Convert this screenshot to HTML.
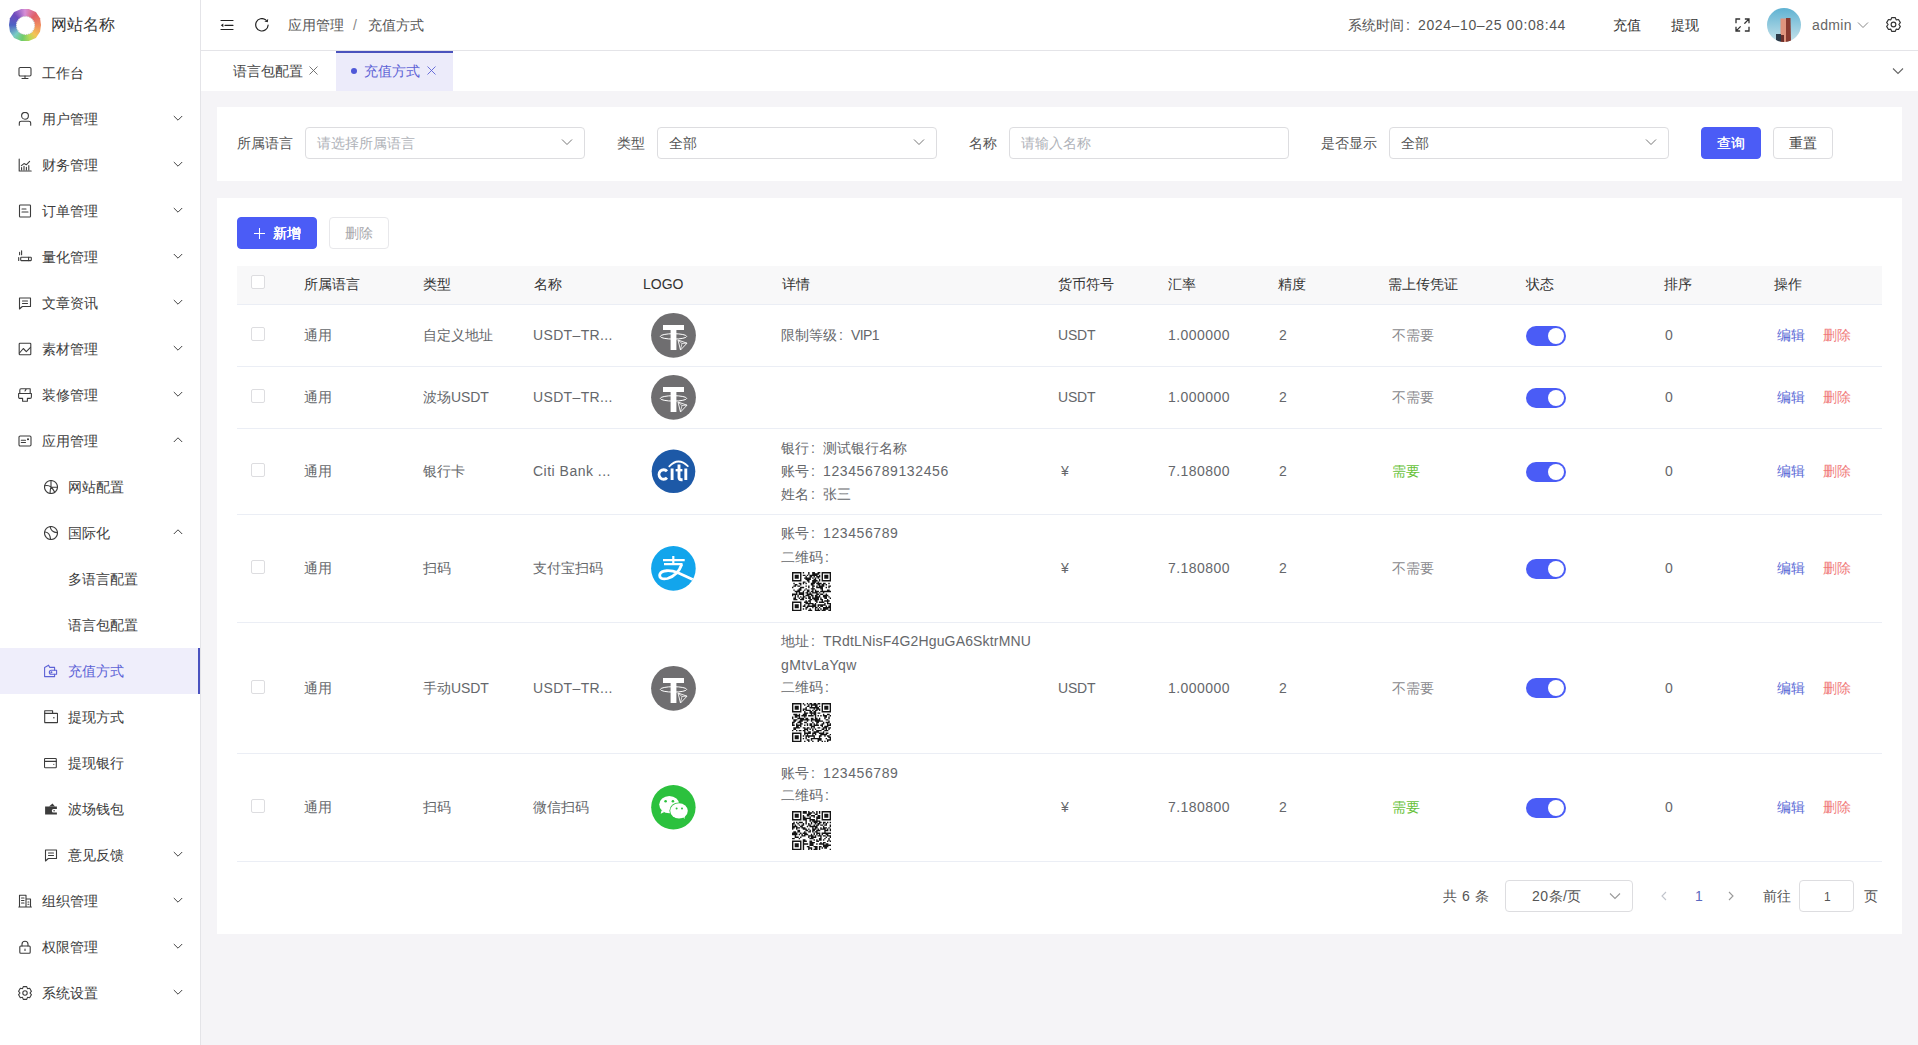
<!DOCTYPE html><html><head><meta charset="utf-8"><style>
*{margin:0;padding:0;box-sizing:border-box}
html,body{width:1918px;height:1045px;overflow:hidden;background:#f5f4f7;font-family:"Liberation Sans",sans-serif;font-size:14px;color:#65676b}
.abs{position:absolute;white-space:nowrap}
.t{position:absolute;white-space:nowrap;line-height:20px;height:20px}
.n{letter-spacing:0.6px}
.c{display:inline-block;width:14px;padding-left:2px;letter-spacing:0}
#side{position:absolute;left:0;top:0;width:201px;height:1045px;background:#fff;border-right:1px solid #e4e4e8}
.mi{position:absolute;left:0;width:200px;height:46px;color:#3c3c3c}
.mi svg.ic{position:absolute;top:16px;width:14px;height:14px}
.mi .tx{position:absolute;top:13px;line-height:20px;white-space:nowrap}
.mi svg.chev{position:absolute;left:173px;top:18px;width:10px;height:8px}
.act{background:#efeefb;color:#5c62d6}
.act::after{content:"";position:absolute;right:0;top:0;width:2px;height:46px;background:#4a52c0}
#hdr{position:absolute;left:201px;top:0;width:1717px;height:51px;background:#fff;border-bottom:1px solid #e4e4e8}
#tabs{position:absolute;left:201px;top:51px;width:1717px;height:40px;background:#fff}
.card{position:absolute;left:217px;width:1685px;background:#fff}
.inp{position:absolute;height:32px;border:1px solid #dddde0;border-radius:4px;background:#fff}
.btn{position:absolute;height:32px;border-radius:4px;text-align:center;line-height:30px;font-size:14px}
.cb{position:absolute;width:14px;height:14px;border:1px solid #dddde0;border-radius:2px;background:#fff}
.sw{position:absolute;width:40px;height:20px;border-radius:10px;background:#4a5cf6}
.sw::after{content:"";position:absolute;left:22px;top:2px;width:16px;height:16px;border-radius:50%;background:#fff}
.hl{position:absolute;left:237px;width:1645px;height:1px;background:#ebeef5}
</style></head><body>
<div id="side">
<div class="abs" style="left:9px;top:9px;width:32px;height:32px;clip-path:polygon(38% 0%,62% 0%,84% 9%,97% 29%,100% 50%,97% 71%,84% 91%,62% 100%,38% 100%,16% 91%,3% 71%,0% 50%,3% 29%,16% 9%);background:conic-gradient(from 0deg,#d78fd6,#e0606a 45deg,#ef8a5e 90deg,#f3c556 135deg,#b7d957 160deg,#6fcc6a 190deg,#79cbc5 225deg,#4d62c4 270deg,#6e4bbd 315deg,#d78fd6 360deg)"></div>
<div class="abs" style="left:15.5px;top:15.5px;width:19px;height:19px;border-radius:50%;background:#fff;border:1px dotted #c8c8c8"></div>
<div class="abs" style="left:51px;top:13px;font-size:16px;line-height:24px;color:#333">网站名称</div>
<div class="mi" style="top:50px"><svg class="ic" style="left:18px" viewBox="0 0 14 14" fill="none" stroke="currentColor" stroke-width="1.1" stroke-linecap="round" stroke-linejoin="round"><rect x="1" y="1.5" width="12" height="8.5" rx="1.2"/><path d="M7 10v2.5M4 12.5h6"/></svg><span class="tx" style="left:42px">工作台</span></div>
<div class="mi" style="top:96px"><svg class="ic" style="left:18px" viewBox="0 0 14 14" fill="none" stroke="currentColor" stroke-width="1.1" stroke-linecap="round" stroke-linejoin="round"><circle cx="7" cy="3.8" r="3.4"/><path d="M1.3 13.3V11.2Q1.3 9.3 3.3 9.3H10.7Q12.7 9.3 12.7 11.2V13.3"/></svg><span class="tx" style="left:42px">用户管理</span><svg class="chev" viewBox="0 0 10 8" fill="none" stroke="#444" stroke-width="1"><path d="M0.8 2l4.2 4.2 4.2-4.2"/></svg></div>
<div class="mi" style="top:142px"><svg class="ic" style="left:18px" viewBox="0 0 14 14" fill="none" stroke="currentColor" stroke-width="1.1" stroke-linecap="round" stroke-linejoin="round"><path d="M1.2 1v12h12"/><path d="M3.6 12V9.5M6 12V8.3M8.4 12V9.2M10.8 12V7.5"/><path d="M3.4 7.6L6 5.6 8.3 6.8 11.6 3.4"/></svg><span class="tx" style="left:42px">财务管理</span><svg class="chev" viewBox="0 0 10 8" fill="none" stroke="#444" stroke-width="1"><path d="M0.8 2l4.2 4.2 4.2-4.2"/></svg></div>
<div class="mi" style="top:188px"><svg class="ic" style="left:18px" viewBox="0 0 14 14" fill="none" stroke="currentColor" stroke-width="1.1" stroke-linecap="round" stroke-linejoin="round"><rect x="1.5" y="1" width="11" height="12" rx="0.8"/><path d="M4 5h4M4 8h6"/></svg><span class="tx" style="left:42px">订单管理</span><svg class="chev" viewBox="0 0 10 8" fill="none" stroke="#444" stroke-width="1"><path d="M0.8 2l4.2 4.2 4.2-4.2"/></svg></div>
<div class="mi" style="top:234px"><svg class="ic" style="left:18px" viewBox="0 0 14 14" fill="none" stroke="currentColor" stroke-width="1.1" stroke-linecap="round" stroke-linejoin="round"><path d="M1.6 2.4v2.4M3.6 0.7v4.1M0.7 7.5v3"/><rect x="2.7" y="7.3" width="10.6" height="3.3" rx="0.6"/><path d="M10.6 7.3v3.3"/></svg><span class="tx" style="left:42px">量化管理</span><svg class="chev" viewBox="0 0 10 8" fill="none" stroke="#444" stroke-width="1"><path d="M0.8 2l4.2 4.2 4.2-4.2"/></svg></div>
<div class="mi" style="top:280px"><svg class="ic" style="left:18px" viewBox="0 0 14 14" fill="none" stroke="currentColor" stroke-width="1.1" stroke-linecap="round" stroke-linejoin="round"><path d="M1.5 2h11v8.5H4.3L1.5 13z"/><path d="M4.5 5h5M4.5 7.5h5"/></svg><span class="tx" style="left:42px">文章资讯</span><svg class="chev" viewBox="0 0 10 8" fill="none" stroke="#444" stroke-width="1"><path d="M0.8 2l4.2 4.2 4.2-4.2"/></svg></div>
<div class="mi" style="top:326px"><svg class="ic" style="left:18px" viewBox="0 0 14 14" fill="none" stroke="currentColor" stroke-width="1.1" stroke-linecap="round" stroke-linejoin="round"><rect x="1.2" y="1.2" width="11.6" height="11.6" rx="0.8"/><path d="M1.5 11l3.8-4.5 3 3.2 4.2-4.4"/></svg><span class="tx" style="left:42px">素材管理</span><svg class="chev" viewBox="0 0 10 8" fill="none" stroke="#444" stroke-width="1"><path d="M0.8 2l4.2 4.2 4.2-4.2"/></svg></div>
<div class="mi" style="top:372px"><svg class="ic" style="left:18px" viewBox="0 0 14 14" fill="none" stroke="currentColor" stroke-width="1.1" stroke-linecap="round" stroke-linejoin="round"><path d="M1.8 5.5V2.3Q1.8 0.8 3 0.8H12.2V5.5M8.3 0.9L7 3"/><path d="M0.6 5.5H13.4V9Q13.4 10.4 12 10.4H9.4V13.2H4.6V10.4H2Q0.6 10.4 0.6 9Z"/></svg><span class="tx" style="left:42px">装修管理</span><svg class="chev" viewBox="0 0 10 8" fill="none" stroke="#444" stroke-width="1"><path d="M0.8 2l4.2 4.2 4.2-4.2"/></svg></div>
<div class="mi" style="top:418px"><svg class="ic" style="left:18px" viewBox="0 0 14 14" fill="none" stroke="currentColor" stroke-width="1.1" stroke-linecap="round" stroke-linejoin="round"><rect x="1" y="2" width="12" height="10" rx="1.2"/><path d="M3.3 6.2h4.2M3.3 8.5h4.2"/><circle cx="10" cy="5.3" r="0.5" fill="currentColor"/></svg><span class="tx" style="left:42px">应用管理</span><svg class="chev" viewBox="0 0 10 8" fill="none" stroke="#444" stroke-width="1"><path d="M0.8 6l4.2-4.2 4.2 4.2"/></svg></div>
<div class="mi" style="top:464px"><svg class="ic" style="left:44px" viewBox="0 0 14 14" fill="none" stroke="currentColor" stroke-width="1.1" stroke-linecap="round" stroke-linejoin="round"><circle cx="7" cy="7" r="6.5"/><path d="M7 0.6V7M7 7C5 5.3 3 5.2 0.7 5.8M7 7C6.2 9.5 6 11.5 6.2 13.4M7 7C9 9 10 10.5 10.7 12.3M7 7C9.5 7 11.5 7 13.4 7.2"/></svg><span class="tx" style="left:68px">网站配置</span></div>
<div class="mi" style="top:510px"><svg class="ic" style="left:44px" viewBox="0 0 14 14" fill="none" stroke="currentColor" stroke-width="1.1" stroke-linecap="round" stroke-linejoin="round"><circle cx="7" cy="7" r="6.5"/><path d="M1.2 6c3 .3 5 2.5 5.4 7.3M6.2 0.6c.3 3 2.5 5.6 7.2 6.2"/></svg><span class="tx" style="left:68px">国际化</span><svg class="chev" viewBox="0 0 10 8" fill="none" stroke="#444" stroke-width="1"><path d="M0.8 6l4.2-4.2 4.2 4.2"/></svg></div>
<div class="mi" style="top:556px"><span class="tx" style="left:68px">多语言配置</span></div>
<div class="mi" style="top:602px"><span class="tx" style="left:68px">语言包配置</span></div>
<div class="mi act" style="top:648px"><svg class="ic" style="left:44px" viewBox="0 0 14 14" fill="none" stroke="currentColor" stroke-width="1.1" stroke-linecap="round" stroke-linejoin="round"><path d="M10.6 6.3V3.4H5.8L4.6 1.2 0.6 3.4V12.6H10.6V10.3"/><path d="M12.6 6.3H7.3Q5.3 6.3 5.3 8.3Q5.3 10.3 7.3 10.3H12.6Z"/><circle cx="7.4" cy="8.3" r="0.5" fill="currentColor"/></svg><span class="tx" style="left:68px">充值方式</span></div>
<div class="mi" style="top:694px"><svg class="ic" style="left:44px" viewBox="0 0 14 14" fill="none" stroke="currentColor" stroke-width="1.1" stroke-linecap="round" stroke-linejoin="round"><rect x="0.7" y="3.4" width="12.8" height="9.2" rx="0.3"/><path d="M0.7 3.4V0.7H8.6V3.4"/><rect x="9.2" y="7.1" width="1.3" height="1.3" fill="currentColor" stroke="none"/></svg><span class="tx" style="left:68px">提现方式</span></div>
<div class="mi" style="top:740px"><svg class="ic" style="left:44px" viewBox="0 0 14 14" fill="none" stroke="currentColor" stroke-width="1.1" stroke-linecap="round" stroke-linejoin="round"><rect x="0.5" y="2.5" width="11.8" height="9.2" rx="0.8"/><path d="M0.5 5.4H12.3"/><rect x="9.3" y="7.9" width="1" height="1" fill="currentColor" stroke="none"/></svg><span class="tx" style="left:68px">提现银行</span></div>
<div class="mi" style="top:786px"><svg class="ic" style="left:44px" viewBox="0 0 14 14" fill="none" stroke="currentColor" stroke-width="1.1" stroke-linecap="round" stroke-linejoin="round"><path d="M1.1 4.6H12.9V6.9H9.6Q7.8 6.9 7.8 8.75Q7.8 10.6 9.6 10.6H12.9V12.6H1.1Z" fill="currentColor" stroke="none"/><path d="M5 4.6L8.5 1.4 11 4.6Z" fill="currentColor" stroke="none"/><circle cx="10.1" cy="8.7" r="0.8" fill="currentColor" stroke="none"/></svg><span class="tx" style="left:68px">波场钱包</span></div>
<div class="mi" style="top:832px"><svg class="ic" style="left:44px" viewBox="0 0 14 14" fill="none" stroke="currentColor" stroke-width="1.1" stroke-linecap="round" stroke-linejoin="round"><path d="M1.5 2h11v8.5H4.3L1.5 13z"/><path d="M4.5 5h5M4.5 7.5h5"/></svg><span class="tx" style="left:68px">意见反馈</span><svg class="chev" viewBox="0 0 10 8" fill="none" stroke="#444" stroke-width="1"><path d="M0.8 2l4.2 4.2 4.2-4.2"/></svg></div>
<div class="mi" style="top:878px"><svg class="ic" style="left:18px" viewBox="0 0 14 14" fill="none" stroke="currentColor" stroke-width="1.1" stroke-linecap="round" stroke-linejoin="round"><path d="M1.5 13V1.2h6.5V13M8 5h4.5v8M0.8 13h12.6M3.5 4h2.5M3.5 6.5h2.5M3.5 9h2.5M10 8h.8M10 10.3h.8"/></svg><span class="tx" style="left:42px">组织管理</span><svg class="chev" viewBox="0 0 10 8" fill="none" stroke="#444" stroke-width="1"><path d="M0.8 2l4.2 4.2 4.2-4.2"/></svg></div>
<div class="mi" style="top:924px"><svg class="ic" style="left:18px" viewBox="0 0 14 14" fill="none" stroke="currentColor" stroke-width="1.1" stroke-linecap="round" stroke-linejoin="round"><rect x="1.8" y="6" width="10.4" height="7.2" rx="1"/><path d="M4 6V4.2a3 3 0 0 1 6 0V6"/><path d="M7 9v1.5"/></svg><span class="tx" style="left:42px">权限管理</span><svg class="chev" viewBox="0 0 10 8" fill="none" stroke="#444" stroke-width="1"><path d="M0.8 2l4.2 4.2 4.2-4.2"/></svg></div>
<div class="mi" style="top:970px"><svg class="ic" style="left:18px" viewBox="0 0 14 14" fill="none" stroke="currentColor" stroke-width="1.1" stroke-linecap="round" stroke-linejoin="round"><path d="M4.50 2.67L5.29 0.62L8.71 0.62L9.50 2.67L9.50 2.67L11.67 2.33L13.38 5.29L12.00 7.00L12.00 7.00L13.38 8.71L11.67 11.67L9.50 11.33L9.50 11.33L8.71 13.38L5.29 13.38L4.50 11.33L4.50 11.33L2.33 11.67L0.62 8.71L2.00 7.00L2.00 7.00L0.62 5.29L2.33 2.33L4.50 2.67Z"/><circle cx="7" cy="7" r="2.2"/></svg><span class="tx" style="left:42px">系统设置</span><svg class="chev" viewBox="0 0 10 8" fill="none" stroke="#444" stroke-width="1"><path d="M0.8 2l4.2 4.2 4.2-4.2"/></svg></div>
</div>
<div id="hdr"></div>
<svg class="abs" style="left:220px;top:18px" width="14" height="14" viewBox="0 0 14 14" fill="none" stroke="#222" stroke-width="1.2" stroke-linecap="round"><path d="M1 2.5h12M5 7.3h8M1 11.5h12"/><path d="M0.8 7.3L3.3 5.4V9.2Z" fill="#222" stroke="none"/></svg>
<svg class="abs" style="left:255px;top:18px" width="14" height="14" viewBox="0 0 14 14" fill="none" stroke="#222" stroke-width="1.2" stroke-linecap="round"><path d="M13.1 7.2A6.2 6.2 0 1 1 10.6 1.8"/><path d="M13.2 0.9L12.8 4.3 9.4 3.5Z" fill="#222" stroke="none"/></svg>
<div class="t" style="left:288px;top:15px;color:#555">应用管理</div>
<div class="t" style="left:353px;top:15px;color:#888">/</div>
<div class="t" style="left:368px;top:15px;color:#555">充值方式</div>
<div class="t" style="left:1348px;top:15px;color:#555">系统时间<span class="c">:</span><span style="letter-spacing:0.62px">2024–10–25 00:08:44</span></div>
<div class="t" style="left:1613px;top:15px;color:#333">充值</div>
<div class="t" style="left:1671px;top:15px;color:#333">提现</div>
<svg class="abs" style="left:1735px;top:18px" width="15" height="14" viewBox="0 0 15 14" fill="none" stroke="#333" stroke-width="1.3" stroke-linecap="square"><path d="M1 4.5V1h3.5M14 9.5V13h-3.5M10.5 1H14v3.5M4.5 13H1V9.5M13.6 1.4L9.8 5.2M1.4 12.6l3.8-3.8"/></svg>
<svg class="abs" style="left:1767px;top:8px" width="34" height="34" viewBox="0 0 34 34"><defs><linearGradient id="av" x1="0" y1="0" x2="0" y2="1"><stop offset="0" stop-color="#5fb2d2"/><stop offset="1" stop-color="#c6e2ea"/></linearGradient><clipPath id="avc"><circle cx="17" cy="17" r="17"/></clipPath></defs><g clip-path="url(#avc)"><rect width="34" height="34" fill="url(#av)"/><path d="M13.5 34V10.5h5.5V34z" fill="#e0947e"/><path d="M19 10h4.5l.5 24h-5z" fill="#8a3a30"/><path d="M9 34V26h5v8z" fill="#2c3a48"/><path d="M14 34v-7h3v7z" fill="#6a2e2a"/></g></svg>
<div class="t" style="left:1812px;top:15px;color:#666;letter-spacing:0.37px">admin</div>
<svg class="abs" style="left:1857px;top:21px" width="12" height="8" viewBox="0 0 12 8" fill="none" stroke="#888" stroke-width="1"><path d="M1 1.5l5 5 5-5"/></svg>
<svg class="abs" style="left:1886px;top:17px" width="15" height="15" viewBox="0 0 14 14" fill="none" stroke="#333" stroke-width="1.1" stroke-linejoin="round"><path d="M4.50 2.67L5.29 0.62L8.71 0.62L9.50 2.67L9.50 2.67L11.67 2.33L13.38 5.29L12.00 7.00L12.00 7.00L13.38 8.71L11.67 11.67L9.50 11.33L9.50 11.33L8.71 13.38L5.29 13.38L4.50 11.33L4.50 11.33L2.33 11.67L0.62 8.71L2.00 7.00L2.00 7.00L0.62 5.29L2.33 2.33L4.50 2.67Z"/><circle cx="7" cy="7" r="2.2"/></svg>
<div id="tabs"></div>
<div class="t" style="left:233px;top:61px;color:#444">语言包配置</div>
<svg class="abs" style="left:309px;top:66px" width="9" height="9" viewBox="0 0 9 9" fill="none" stroke="#666" stroke-width="0.9"><path d="M0.5 0.5l8 8M8.5 0.5l-8 8"/></svg>
<div class="abs" style="left:336px;top:51px;width:117px;height:40px;background:#ecebfa;border-top:2px solid #4a52bd"></div>
<div class="abs" style="left:351px;top:68px;width:6px;height:6px;border-radius:50%;background:#4f58d8"></div>
<div class="t" style="left:364px;top:61px;color:#5c62d6">充值方式</div>
<svg class="abs" style="left:427px;top:66px" width="9" height="9" viewBox="0 0 9 9" fill="none" stroke="#5c62d6" stroke-width="0.9"><path d="M0.5 0.5l8 8M8.5 0.5l-8 8"/></svg>
<svg class="abs" style="left:1892px;top:67px" width="12" height="8" viewBox="0 0 12 8" fill="none" stroke="#666" stroke-width="1.1"><path d="M1 1.5l5 5 5-5"/></svg>
<div class="card" style="top:107px;height:74px"></div>
<div class="t" style="left:237px;top:133px;color:#555">所属语言</div>
<div class="inp" style="left:305px;top:127px;width:280px"></div>
<div class="t" style="left:317px;top:133px;color:#b0b3b9">请选择所属语言</div>
<svg class="abs" style="left:561px;top:138px" width="12" height="8" viewBox="0 0 12 8" fill="none" stroke="#666" stroke-width="0.9"><path d="M1 1.5l5 5 5-5"/></svg>
<div class="t" style="left:617px;top:133px;color:#555">类型</div>
<div class="inp" style="left:657px;top:127px;width:280px"></div>
<div class="t" style="left:669px;top:133px;color:#555">全部</div>
<svg class="abs" style="left:913px;top:138px" width="12" height="8" viewBox="0 0 12 8" fill="none" stroke="#666" stroke-width="0.9"><path d="M1 1.5l5 5 5-5"/></svg>
<div class="t" style="left:969px;top:133px;color:#555">名称</div>
<div class="inp" style="left:1009px;top:127px;width:280px"></div>
<div class="t" style="left:1021px;top:133px;color:#b0b3b9">请输入名称</div>
<div class="t" style="left:1321px;top:133px;color:#555">是否显示</div>
<div class="inp" style="left:1389px;top:127px;width:280px"></div>
<div class="t" style="left:1401px;top:133px;color:#555">全部</div>
<svg class="abs" style="left:1645px;top:138px" width="12" height="8" viewBox="0 0 12 8" fill="none" stroke="#666" stroke-width="0.9"><path d="M1 1.5l5 5 5-5"/></svg>
<div class="btn" style="left:1701px;top:127px;width:60px;background:#4b5cf6;color:#fff;border:1px solid #4b5cf6;text-shadow:0.35px 0 0 #fff">查询</div>
<div class="btn" style="left:1773px;top:127px;width:60px;background:#fff;color:#444;border:1px solid #dddde0">重置</div>
<div class="card" style="top:198px;height:736px"></div>
<div class="btn" style="left:237px;top:217px;width:80px;background:#4b5cf6;color:#fff;border:1px solid #4b5cf6"><svg style="position:absolute;left:16px;top:10px" width="11" height="11" viewBox="0 0 11 11" stroke="#fff" stroke-width="1.05"><path d="M5.5 0v11M0 5.5h11"/></svg><span style="position:absolute;left:35px;text-shadow:0.45px 0 0 #fff,-0.2px 0 0 #fff">新增</span></div>
<div class="btn" style="left:329px;top:217px;width:60px;background:#fff;color:#a8a8ac;border:1px solid #e8e8eb">删除</div>
<div class="abs" style="left:237px;top:266px;width:1645px;height:38px;background:#f8f8f9"></div>
<div class="hl" style="top:304px"></div>
<div class="cb" style="left:251px;top:275px"></div>
<div class="t" style="left:304px;top:274px;color:#333">所属语言</div>
<div class="t" style="left:423px;top:274px;color:#333">类型</div>
<div class="t" style="left:534px;top:274px;color:#333">名称</div>
<div class="t" style="left:643px;top:274px;color:#333">LOGO</div>
<div class="t" style="left:782px;top:274px;color:#333">详情</div>
<div class="t" style="left:1058px;top:274px;color:#333">货币符号</div>
<div class="t" style="left:1168px;top:274px;color:#333">汇率</div>
<div class="t" style="left:1278px;top:274px;color:#333">精度</div>
<div class="t" style="left:1388px;top:274px;color:#333">需上传凭证</div>
<div class="t" style="left:1526px;top:274px;color:#333">状态</div>
<div class="t" style="left:1664px;top:274px;color:#333">排序</div>
<div class="t" style="left:1774px;top:274px;color:#333">操作</div>
<div class="hl" style="top:366px"></div>
<div class="cb" style="left:251px;top:327px"></div>
<div class="t" style="left:304px;top:325px">通用</div>
<div class="t" style="left:423px;top:325px">自定义地址</div>
<div class="t" style="left:533px;top:325px"><span style="letter-spacing:0.35px">USDT–TR...</span></div>
<svg class="abs" style="left:645px;top:307px" width="56" height="56" viewBox="0 0 56 56"><circle cx="28.5" cy="28.3" r="22.4" fill="#6f6e70"/><path d="M18 18h21v5h-7.6v20h-5.8V23H18z" fill="#fff"/><ellipse cx="28.5" cy="29.4" rx="13.2" ry="2.7" fill="none" stroke="#fff" stroke-width="1"/><path d="M33 33l9 3.2-6.5 6.8z" fill="none" stroke="#fff" stroke-width="0.9" stroke-linejoin="round"/><path d="M33.5 33.5l3.5 3 -1.5 6M42 36.2l-5 .3" fill="none" stroke="#fff" stroke-width="0.7"/></svg>
<div class="t" style="left:781px;top:324px;line-height:23px;height:23px">限制等级<span class="c">:</span><span style="letter-spacing:-0.60px">VIP1</span></div>
<div class="t" style="left:1058px;top:325px"><span style="letter-spacing:-0.20px">USDT</span></div>
<div class="t" style="left:1168px;top:325px"><span style="letter-spacing:0.45px">1.000000</span></div>
<div class="t" style="left:1279px;top:325px">2</div>
<div class="t" style="left:1392px;top:325px;color:#8a8a8e">不需要</div>
<div class="sw" style="left:1526px;top:326px"></div>
<div class="t" style="left:1665px;top:325px">0</div>
<div class="t" style="left:1777px;top:325px;color:#5a6ad6">编辑</div>
<div class="t" style="left:1823px;top:325px;color:#f07a7a">删除</div>
<div class="hl" style="top:428px"></div>
<div class="cb" style="left:251px;top:389px"></div>
<div class="t" style="left:304px;top:387px">通用</div>
<div class="t" style="left:423px;top:387px">波场<span style="letter-spacing:-0.10px">USDT</span></div>
<div class="t" style="left:533px;top:387px"><span style="letter-spacing:0.35px">USDT–TR...</span></div>
<svg class="abs" style="left:645px;top:369px" width="56" height="56" viewBox="0 0 56 56"><circle cx="28.5" cy="28.3" r="22.4" fill="#6f6e70"/><path d="M18 18h21v5h-7.6v20h-5.8V23H18z" fill="#fff"/><ellipse cx="28.5" cy="29.4" rx="13.2" ry="2.7" fill="none" stroke="#fff" stroke-width="1"/><path d="M33 33l9 3.2-6.5 6.8z" fill="none" stroke="#fff" stroke-width="0.9" stroke-linejoin="round"/><path d="M33.5 33.5l3.5 3 -1.5 6M42 36.2l-5 .3" fill="none" stroke="#fff" stroke-width="0.7"/></svg>
<div class="t" style="left:1058px;top:387px"><span style="letter-spacing:-0.20px">USDT</span></div>
<div class="t" style="left:1168px;top:387px"><span style="letter-spacing:0.45px">1.000000</span></div>
<div class="t" style="left:1279px;top:387px">2</div>
<div class="t" style="left:1392px;top:387px;color:#8a8a8e">不需要</div>
<div class="sw" style="left:1526px;top:388px"></div>
<div class="t" style="left:1665px;top:387px">0</div>
<div class="t" style="left:1777px;top:387px;color:#5a6ad6">编辑</div>
<div class="t" style="left:1823px;top:387px;color:#f07a7a">删除</div>
<div class="hl" style="top:514px"></div>
<div class="cb" style="left:251px;top:463px"></div>
<div class="t" style="left:304px;top:461px">通用</div>
<div class="t" style="left:423px;top:461px">银行卡</div>
<div class="t" style="left:533px;top:461px"><span style="letter-spacing:0.49px">Citi Bank ...</span></div>
<svg class="abs" style="left:645px;top:443px" width="56" height="56" viewBox="0 0 56 56"><circle cx="28.5" cy="28.3" r="21.8" fill="#1d59a7"/><path d="M24.3 23.3Q33.4 13.8 42.8 23.1" fill="none" stroke="#fff" stroke-width="1.8" stroke-linecap="round"/><path d="M22 28.2a4.6 4.8 0 1 0 0 6.6" fill="none" stroke="#fff" stroke-width="2.9"/><path d="M27.1 25.5V37M40.8 25.5V37" fill="none" stroke="#fff" stroke-width="2.9"/><path d="M34 21.5V34.5q0 2.2 2.6 2.2h1" fill="none" stroke="#fff" stroke-width="2.9"/><path d="M30.6 27.2h6.8" fill="none" stroke="#fff" stroke-width="2.4"/></svg>
<div class="t" style="left:781px;top:437px;line-height:23px;height:23px">银行<span class="c">:</span>测试银行名称</div>
<div class="t" style="left:781px;top:460px;line-height:23px;height:23px">账号<span class="c">:</span><span style="letter-spacing:0.60px">123456789132456</span></div>
<div class="t" style="left:781px;top:483px;line-height:23px;height:23px">姓名<span class="c">:</span>张三</div>
<div class="t" style="left:1061px;top:461px">¥</div>
<div class="t" style="left:1168px;top:461px"><span style="letter-spacing:0.45px">7.180800</span></div>
<div class="t" style="left:1279px;top:461px">2</div>
<div class="t" style="left:1392px;top:461px;color:#67c23a">需要</div>
<div class="sw" style="left:1526px;top:462px"></div>
<div class="t" style="left:1665px;top:461px">0</div>
<div class="t" style="left:1777px;top:461px;color:#5a6ad6">编辑</div>
<div class="t" style="left:1823px;top:461px;color:#f07a7a">删除</div>
<div class="hl" style="top:622px"></div>
<div class="cb" style="left:251px;top:560px"></div>
<div class="t" style="left:304px;top:558px">通用</div>
<div class="t" style="left:423px;top:558px">扫码</div>
<div class="t" style="left:533px;top:558px">支付宝扫码</div>
<svg class="abs" style="left:645px;top:540px" width="56" height="56" viewBox="0 0 56 56"><defs><clipPath id="ac568"><circle cx="28.4" cy="28.4" r="22.3"/></clipPath></defs><circle cx="28.4" cy="28.4" r="22.3" fill="#12a5ec"/><g clip-path="url(#ac568)" fill="none" stroke="#fff" stroke-linecap="butt"><path d="M18 20.1H39.7M28.3 16V23.5M19 24.1H37.5" stroke-width="2.2"/><path d="M36.8 24.3C34.5 31 29.5 36.5 22.5 38.5C16.5 40 13.8 37.3 15 34C16.5 30.2 25 29.5 33 32.8L52 41.5" stroke-width="2.8"/></g></svg>
<div class="t" style="left:781px;top:522px;line-height:23px;height:23px">账号<span class="c">:</span><span style="letter-spacing:0.60px">123456789</span></div>
<div class="t" style="left:781px;top:546px;line-height:23px;height:23px">二维码<span class="c">:</span></div>
<svg class="abs" style="left:792px;top:572px" width="39" height="39" viewBox="0 0 39 39"><path d="M0.00 0.00h1.39v1.39h-1.39zM1.34 0.00h1.39v1.39h-1.39zM2.69 0.00h1.39v1.39h-1.39zM4.03 0.00h1.39v1.39h-1.39zM5.38 0.00h1.39v1.39h-1.39zM6.72 0.00h1.39v1.39h-1.39zM8.07 0.00h1.39v1.39h-1.39zM10.76 0.00h1.39v1.39h-1.39zM16.14 0.00h1.39v1.39h-1.39zM20.17 0.00h1.39v1.39h-1.39zM21.52 0.00h1.39v1.39h-1.39zM25.55 0.00h1.39v1.39h-1.39zM26.90 0.00h1.39v1.39h-1.39zM29.59 0.00h1.39v1.39h-1.39zM30.93 0.00h1.39v1.39h-1.39zM32.28 0.00h1.39v1.39h-1.39zM33.62 0.00h1.39v1.39h-1.39zM34.97 0.00h1.39v1.39h-1.39zM36.31 0.00h1.39v1.39h-1.39zM37.66 0.00h1.39v1.39h-1.39zM0.00 1.34h1.39v1.39h-1.39zM8.07 1.34h1.39v1.39h-1.39zM16.14 1.34h1.39v1.39h-1.39zM20.17 1.34h1.39v1.39h-1.39zM21.52 1.34h1.39v1.39h-1.39zM22.86 1.34h1.39v1.39h-1.39zM24.21 1.34h1.39v1.39h-1.39zM25.55 1.34h1.39v1.39h-1.39zM29.59 1.34h1.39v1.39h-1.39zM37.66 1.34h1.39v1.39h-1.39zM0.00 2.69h1.39v1.39h-1.39zM2.69 2.69h1.39v1.39h-1.39zM4.03 2.69h1.39v1.39h-1.39zM5.38 2.69h1.39v1.39h-1.39zM8.07 2.69h1.39v1.39h-1.39zM10.76 2.69h1.39v1.39h-1.39zM12.10 2.69h1.39v1.39h-1.39zM14.79 2.69h1.39v1.39h-1.39zM17.48 2.69h1.39v1.39h-1.39zM18.83 2.69h1.39v1.39h-1.39zM20.17 2.69h1.39v1.39h-1.39zM21.52 2.69h1.39v1.39h-1.39zM22.86 2.69h1.39v1.39h-1.39zM24.21 2.69h1.39v1.39h-1.39zM26.90 2.69h1.39v1.39h-1.39zM29.59 2.69h1.39v1.39h-1.39zM32.28 2.69h1.39v1.39h-1.39zM33.62 2.69h1.39v1.39h-1.39zM34.97 2.69h1.39v1.39h-1.39zM37.66 2.69h1.39v1.39h-1.39zM0.00 4.03h1.39v1.39h-1.39zM2.69 4.03h1.39v1.39h-1.39zM4.03 4.03h1.39v1.39h-1.39zM5.38 4.03h1.39v1.39h-1.39zM8.07 4.03h1.39v1.39h-1.39zM13.45 4.03h1.39v1.39h-1.39zM17.48 4.03h1.39v1.39h-1.39zM18.83 4.03h1.39v1.39h-1.39zM21.52 4.03h1.39v1.39h-1.39zM24.21 4.03h1.39v1.39h-1.39zM25.55 4.03h1.39v1.39h-1.39zM26.90 4.03h1.39v1.39h-1.39zM29.59 4.03h1.39v1.39h-1.39zM32.28 4.03h1.39v1.39h-1.39zM33.62 4.03h1.39v1.39h-1.39zM34.97 4.03h1.39v1.39h-1.39zM37.66 4.03h1.39v1.39h-1.39zM0.00 5.38h1.39v1.39h-1.39zM2.69 5.38h1.39v1.39h-1.39zM4.03 5.38h1.39v1.39h-1.39zM5.38 5.38h1.39v1.39h-1.39zM8.07 5.38h1.39v1.39h-1.39zM12.10 5.38h1.39v1.39h-1.39zM13.45 5.38h1.39v1.39h-1.39zM14.79 5.38h1.39v1.39h-1.39zM16.14 5.38h1.39v1.39h-1.39zM17.48 5.38h1.39v1.39h-1.39zM20.17 5.38h1.39v1.39h-1.39zM22.86 5.38h1.39v1.39h-1.39zM25.55 5.38h1.39v1.39h-1.39zM29.59 5.38h1.39v1.39h-1.39zM32.28 5.38h1.39v1.39h-1.39zM33.62 5.38h1.39v1.39h-1.39zM34.97 5.38h1.39v1.39h-1.39zM37.66 5.38h1.39v1.39h-1.39zM0.00 6.72h1.39v1.39h-1.39zM8.07 6.72h1.39v1.39h-1.39zM13.45 6.72h1.39v1.39h-1.39zM14.79 6.72h1.39v1.39h-1.39zM16.14 6.72h1.39v1.39h-1.39zM17.48 6.72h1.39v1.39h-1.39zM21.52 6.72h1.39v1.39h-1.39zM22.86 6.72h1.39v1.39h-1.39zM26.90 6.72h1.39v1.39h-1.39zM29.59 6.72h1.39v1.39h-1.39zM37.66 6.72h1.39v1.39h-1.39zM0.00 8.07h1.39v1.39h-1.39zM1.34 8.07h1.39v1.39h-1.39zM2.69 8.07h1.39v1.39h-1.39zM4.03 8.07h1.39v1.39h-1.39zM5.38 8.07h1.39v1.39h-1.39zM6.72 8.07h1.39v1.39h-1.39zM8.07 8.07h1.39v1.39h-1.39zM14.79 8.07h1.39v1.39h-1.39zM16.14 8.07h1.39v1.39h-1.39zM20.17 8.07h1.39v1.39h-1.39zM21.52 8.07h1.39v1.39h-1.39zM22.86 8.07h1.39v1.39h-1.39zM24.21 8.07h1.39v1.39h-1.39zM26.90 8.07h1.39v1.39h-1.39zM29.59 8.07h1.39v1.39h-1.39zM30.93 8.07h1.39v1.39h-1.39zM32.28 8.07h1.39v1.39h-1.39zM33.62 8.07h1.39v1.39h-1.39zM34.97 8.07h1.39v1.39h-1.39zM36.31 8.07h1.39v1.39h-1.39zM37.66 8.07h1.39v1.39h-1.39zM10.76 9.41h1.39v1.39h-1.39zM12.10 9.41h1.39v1.39h-1.39zM16.14 9.41h1.39v1.39h-1.39zM20.17 9.41h1.39v1.39h-1.39zM21.52 9.41h1.39v1.39h-1.39zM22.86 9.41h1.39v1.39h-1.39zM25.55 9.41h1.39v1.39h-1.39zM1.34 10.76h1.39v1.39h-1.39zM6.72 10.76h1.39v1.39h-1.39zM8.07 10.76h1.39v1.39h-1.39zM10.76 10.76h1.39v1.39h-1.39zM13.45 10.76h1.39v1.39h-1.39zM18.83 10.76h1.39v1.39h-1.39zM20.17 10.76h1.39v1.39h-1.39zM21.52 10.76h1.39v1.39h-1.39zM24.21 10.76h1.39v1.39h-1.39zM25.55 10.76h1.39v1.39h-1.39zM26.90 10.76h1.39v1.39h-1.39zM28.24 10.76h1.39v1.39h-1.39zM30.93 10.76h1.39v1.39h-1.39zM32.28 10.76h1.39v1.39h-1.39zM36.31 10.76h1.39v1.39h-1.39zM2.69 12.10h1.39v1.39h-1.39zM4.03 12.10h1.39v1.39h-1.39zM8.07 12.10h1.39v1.39h-1.39zM18.83 12.10h1.39v1.39h-1.39zM20.17 12.10h1.39v1.39h-1.39zM25.55 12.10h1.39v1.39h-1.39zM26.90 12.10h1.39v1.39h-1.39zM29.59 12.10h1.39v1.39h-1.39zM30.93 12.10h1.39v1.39h-1.39zM33.62 12.10h1.39v1.39h-1.39zM1.34 13.45h1.39v1.39h-1.39zM2.69 13.45h1.39v1.39h-1.39zM5.38 13.45h1.39v1.39h-1.39zM6.72 13.45h1.39v1.39h-1.39zM13.45 13.45h1.39v1.39h-1.39zM16.14 13.45h1.39v1.39h-1.39zM20.17 13.45h1.39v1.39h-1.39zM21.52 13.45h1.39v1.39h-1.39zM24.21 13.45h1.39v1.39h-1.39zM26.90 13.45h1.39v1.39h-1.39zM28.24 13.45h1.39v1.39h-1.39zM29.59 13.45h1.39v1.39h-1.39zM30.93 13.45h1.39v1.39h-1.39zM36.31 13.45h1.39v1.39h-1.39zM37.66 13.45h1.39v1.39h-1.39zM0.00 14.79h1.39v1.39h-1.39zM8.07 14.79h1.39v1.39h-1.39zM9.41 14.79h1.39v1.39h-1.39zM10.76 14.79h1.39v1.39h-1.39zM16.14 14.79h1.39v1.39h-1.39zM20.17 14.79h1.39v1.39h-1.39zM24.21 14.79h1.39v1.39h-1.39zM25.55 14.79h1.39v1.39h-1.39zM26.90 14.79h1.39v1.39h-1.39zM28.24 14.79h1.39v1.39h-1.39zM29.59 14.79h1.39v1.39h-1.39zM33.62 14.79h1.39v1.39h-1.39zM36.31 14.79h1.39v1.39h-1.39zM6.72 16.14h1.39v1.39h-1.39zM8.07 16.14h1.39v1.39h-1.39zM13.45 16.14h1.39v1.39h-1.39zM18.83 16.14h1.39v1.39h-1.39zM20.17 16.14h1.39v1.39h-1.39zM21.52 16.14h1.39v1.39h-1.39zM28.24 16.14h1.39v1.39h-1.39zM29.59 16.14h1.39v1.39h-1.39zM1.34 17.48h1.39v1.39h-1.39zM5.38 17.48h1.39v1.39h-1.39zM6.72 17.48h1.39v1.39h-1.39zM8.07 17.48h1.39v1.39h-1.39zM12.10 17.48h1.39v1.39h-1.39zM14.79 17.48h1.39v1.39h-1.39zM16.14 17.48h1.39v1.39h-1.39zM20.17 17.48h1.39v1.39h-1.39zM22.86 17.48h1.39v1.39h-1.39zM29.59 17.48h1.39v1.39h-1.39zM34.97 17.48h1.39v1.39h-1.39zM36.31 17.48h1.39v1.39h-1.39zM2.69 18.83h1.39v1.39h-1.39zM4.03 18.83h1.39v1.39h-1.39zM5.38 18.83h1.39v1.39h-1.39zM6.72 18.83h1.39v1.39h-1.39zM10.76 18.83h1.39v1.39h-1.39zM14.79 18.83h1.39v1.39h-1.39zM16.14 18.83h1.39v1.39h-1.39zM18.83 18.83h1.39v1.39h-1.39zM20.17 18.83h1.39v1.39h-1.39zM22.86 18.83h1.39v1.39h-1.39zM24.21 18.83h1.39v1.39h-1.39zM25.55 18.83h1.39v1.39h-1.39zM28.24 18.83h1.39v1.39h-1.39zM29.59 18.83h1.39v1.39h-1.39zM30.93 18.83h1.39v1.39h-1.39zM32.28 18.83h1.39v1.39h-1.39zM33.62 18.83h1.39v1.39h-1.39zM34.97 18.83h1.39v1.39h-1.39zM36.31 18.83h1.39v1.39h-1.39zM37.66 18.83h1.39v1.39h-1.39zM4.03 20.17h1.39v1.39h-1.39zM6.72 20.17h1.39v1.39h-1.39zM8.07 20.17h1.39v1.39h-1.39zM9.41 20.17h1.39v1.39h-1.39zM10.76 20.17h1.39v1.39h-1.39zM13.45 20.17h1.39v1.39h-1.39zM14.79 20.17h1.39v1.39h-1.39zM17.48 20.17h1.39v1.39h-1.39zM20.17 20.17h1.39v1.39h-1.39zM21.52 20.17h1.39v1.39h-1.39zM22.86 20.17h1.39v1.39h-1.39zM24.21 20.17h1.39v1.39h-1.39zM26.90 20.17h1.39v1.39h-1.39zM30.93 20.17h1.39v1.39h-1.39zM0.00 21.52h1.39v1.39h-1.39zM1.34 21.52h1.39v1.39h-1.39zM2.69 21.52h1.39v1.39h-1.39zM4.03 21.52h1.39v1.39h-1.39zM6.72 21.52h1.39v1.39h-1.39zM8.07 21.52h1.39v1.39h-1.39zM9.41 21.52h1.39v1.39h-1.39zM10.76 21.52h1.39v1.39h-1.39zM14.79 21.52h1.39v1.39h-1.39zM16.14 21.52h1.39v1.39h-1.39zM17.48 21.52h1.39v1.39h-1.39zM18.83 21.52h1.39v1.39h-1.39zM24.21 21.52h1.39v1.39h-1.39zM25.55 21.52h1.39v1.39h-1.39zM28.24 21.52h1.39v1.39h-1.39zM29.59 21.52h1.39v1.39h-1.39zM33.62 21.52h1.39v1.39h-1.39zM0.00 22.86h1.39v1.39h-1.39zM2.69 22.86h1.39v1.39h-1.39zM5.38 22.86h1.39v1.39h-1.39zM10.76 22.86h1.39v1.39h-1.39zM13.45 22.86h1.39v1.39h-1.39zM14.79 22.86h1.39v1.39h-1.39zM16.14 22.86h1.39v1.39h-1.39zM18.83 22.86h1.39v1.39h-1.39zM20.17 22.86h1.39v1.39h-1.39zM22.86 22.86h1.39v1.39h-1.39zM24.21 22.86h1.39v1.39h-1.39zM26.90 22.86h1.39v1.39h-1.39zM30.93 22.86h1.39v1.39h-1.39zM32.28 22.86h1.39v1.39h-1.39zM33.62 22.86h1.39v1.39h-1.39zM34.97 22.86h1.39v1.39h-1.39zM2.69 24.21h1.39v1.39h-1.39zM5.38 24.21h1.39v1.39h-1.39zM8.07 24.21h1.39v1.39h-1.39zM10.76 24.21h1.39v1.39h-1.39zM12.10 24.21h1.39v1.39h-1.39zM16.14 24.21h1.39v1.39h-1.39zM17.48 24.21h1.39v1.39h-1.39zM20.17 24.21h1.39v1.39h-1.39zM22.86 24.21h1.39v1.39h-1.39zM24.21 24.21h1.39v1.39h-1.39zM25.55 24.21h1.39v1.39h-1.39zM26.90 24.21h1.39v1.39h-1.39zM30.93 24.21h1.39v1.39h-1.39zM32.28 24.21h1.39v1.39h-1.39zM33.62 24.21h1.39v1.39h-1.39zM36.31 24.21h1.39v1.39h-1.39zM1.34 25.55h1.39v1.39h-1.39zM2.69 25.55h1.39v1.39h-1.39zM6.72 25.55h1.39v1.39h-1.39zM9.41 25.55h1.39v1.39h-1.39zM10.76 25.55h1.39v1.39h-1.39zM13.45 25.55h1.39v1.39h-1.39zM16.14 25.55h1.39v1.39h-1.39zM17.48 25.55h1.39v1.39h-1.39zM20.17 25.55h1.39v1.39h-1.39zM21.52 25.55h1.39v1.39h-1.39zM22.86 25.55h1.39v1.39h-1.39zM24.21 25.55h1.39v1.39h-1.39zM25.55 25.55h1.39v1.39h-1.39zM28.24 25.55h1.39v1.39h-1.39zM32.28 25.55h1.39v1.39h-1.39zM33.62 25.55h1.39v1.39h-1.39zM37.66 25.55h1.39v1.39h-1.39zM1.34 26.90h1.39v1.39h-1.39zM2.69 26.90h1.39v1.39h-1.39zM4.03 26.90h1.39v1.39h-1.39zM8.07 26.90h1.39v1.39h-1.39zM9.41 26.90h1.39v1.39h-1.39zM10.76 26.90h1.39v1.39h-1.39zM17.48 26.90h1.39v1.39h-1.39zM18.83 26.90h1.39v1.39h-1.39zM21.52 26.90h1.39v1.39h-1.39zM22.86 26.90h1.39v1.39h-1.39zM24.21 26.90h1.39v1.39h-1.39zM25.55 26.90h1.39v1.39h-1.39zM28.24 26.90h1.39v1.39h-1.39zM29.59 26.90h1.39v1.39h-1.39zM34.97 26.90h1.39v1.39h-1.39zM13.45 28.24h1.39v1.39h-1.39zM16.14 28.24h1.39v1.39h-1.39zM17.48 28.24h1.39v1.39h-1.39zM22.86 28.24h1.39v1.39h-1.39zM24.21 28.24h1.39v1.39h-1.39zM29.59 28.24h1.39v1.39h-1.39zM32.28 28.24h1.39v1.39h-1.39zM33.62 28.24h1.39v1.39h-1.39zM34.97 28.24h1.39v1.39h-1.39zM36.31 28.24h1.39v1.39h-1.39zM0.00 29.59h1.39v1.39h-1.39zM1.34 29.59h1.39v1.39h-1.39zM2.69 29.59h1.39v1.39h-1.39zM4.03 29.59h1.39v1.39h-1.39zM5.38 29.59h1.39v1.39h-1.39zM6.72 29.59h1.39v1.39h-1.39zM8.07 29.59h1.39v1.39h-1.39zM12.10 29.59h1.39v1.39h-1.39zM13.45 29.59h1.39v1.39h-1.39zM14.79 29.59h1.39v1.39h-1.39zM17.48 29.59h1.39v1.39h-1.39zM24.21 29.59h1.39v1.39h-1.39zM26.90 29.59h1.39v1.39h-1.39zM28.24 29.59h1.39v1.39h-1.39zM29.59 29.59h1.39v1.39h-1.39zM30.93 29.59h1.39v1.39h-1.39zM34.97 29.59h1.39v1.39h-1.39zM0.00 30.93h1.39v1.39h-1.39zM8.07 30.93h1.39v1.39h-1.39zM13.45 30.93h1.39v1.39h-1.39zM14.79 30.93h1.39v1.39h-1.39zM16.14 30.93h1.39v1.39h-1.39zM17.48 30.93h1.39v1.39h-1.39zM18.83 30.93h1.39v1.39h-1.39zM20.17 30.93h1.39v1.39h-1.39zM22.86 30.93h1.39v1.39h-1.39zM32.28 30.93h1.39v1.39h-1.39zM34.97 30.93h1.39v1.39h-1.39zM36.31 30.93h1.39v1.39h-1.39zM37.66 30.93h1.39v1.39h-1.39zM0.00 32.28h1.39v1.39h-1.39zM2.69 32.28h1.39v1.39h-1.39zM4.03 32.28h1.39v1.39h-1.39zM5.38 32.28h1.39v1.39h-1.39zM8.07 32.28h1.39v1.39h-1.39zM12.10 32.28h1.39v1.39h-1.39zM16.14 32.28h1.39v1.39h-1.39zM20.17 32.28h1.39v1.39h-1.39zM21.52 32.28h1.39v1.39h-1.39zM22.86 32.28h1.39v1.39h-1.39zM25.55 32.28h1.39v1.39h-1.39zM26.90 32.28h1.39v1.39h-1.39zM28.24 32.28h1.39v1.39h-1.39zM29.59 32.28h1.39v1.39h-1.39zM30.93 32.28h1.39v1.39h-1.39zM32.28 32.28h1.39v1.39h-1.39zM37.66 32.28h1.39v1.39h-1.39zM0.00 33.62h1.39v1.39h-1.39zM2.69 33.62h1.39v1.39h-1.39zM4.03 33.62h1.39v1.39h-1.39zM5.38 33.62h1.39v1.39h-1.39zM8.07 33.62h1.39v1.39h-1.39zM10.76 33.62h1.39v1.39h-1.39zM12.10 33.62h1.39v1.39h-1.39zM14.79 33.62h1.39v1.39h-1.39zM16.14 33.62h1.39v1.39h-1.39zM17.48 33.62h1.39v1.39h-1.39zM18.83 33.62h1.39v1.39h-1.39zM20.17 33.62h1.39v1.39h-1.39zM21.52 33.62h1.39v1.39h-1.39zM22.86 33.62h1.39v1.39h-1.39zM25.55 33.62h1.39v1.39h-1.39zM28.24 33.62h1.39v1.39h-1.39zM29.59 33.62h1.39v1.39h-1.39zM33.62 33.62h1.39v1.39h-1.39zM36.31 33.62h1.39v1.39h-1.39zM37.66 33.62h1.39v1.39h-1.39zM0.00 34.97h1.39v1.39h-1.39zM2.69 34.97h1.39v1.39h-1.39zM4.03 34.97h1.39v1.39h-1.39zM5.38 34.97h1.39v1.39h-1.39zM8.07 34.97h1.39v1.39h-1.39zM13.45 34.97h1.39v1.39h-1.39zM14.79 34.97h1.39v1.39h-1.39zM20.17 34.97h1.39v1.39h-1.39zM22.86 34.97h1.39v1.39h-1.39zM24.21 34.97h1.39v1.39h-1.39zM26.90 34.97h1.39v1.39h-1.39zM30.93 34.97h1.39v1.39h-1.39zM32.28 34.97h1.39v1.39h-1.39zM33.62 34.97h1.39v1.39h-1.39zM34.97 34.97h1.39v1.39h-1.39zM36.31 34.97h1.39v1.39h-1.39zM37.66 34.97h1.39v1.39h-1.39zM0.00 36.31h1.39v1.39h-1.39zM8.07 36.31h1.39v1.39h-1.39zM10.76 36.31h1.39v1.39h-1.39zM13.45 36.31h1.39v1.39h-1.39zM17.48 36.31h1.39v1.39h-1.39zM22.86 36.31h1.39v1.39h-1.39zM25.55 36.31h1.39v1.39h-1.39zM28.24 36.31h1.39v1.39h-1.39zM30.93 36.31h1.39v1.39h-1.39zM32.28 36.31h1.39v1.39h-1.39zM33.62 36.31h1.39v1.39h-1.39zM34.97 36.31h1.39v1.39h-1.39zM37.66 36.31h1.39v1.39h-1.39zM0.00 37.66h1.39v1.39h-1.39zM1.34 37.66h1.39v1.39h-1.39zM2.69 37.66h1.39v1.39h-1.39zM4.03 37.66h1.39v1.39h-1.39zM5.38 37.66h1.39v1.39h-1.39zM6.72 37.66h1.39v1.39h-1.39zM8.07 37.66h1.39v1.39h-1.39zM16.14 37.66h1.39v1.39h-1.39zM17.48 37.66h1.39v1.39h-1.39zM18.83 37.66h1.39v1.39h-1.39zM22.86 37.66h1.39v1.39h-1.39zM24.21 37.66h1.39v1.39h-1.39zM25.55 37.66h1.39v1.39h-1.39zM26.90 37.66h1.39v1.39h-1.39zM29.59 37.66h1.39v1.39h-1.39zM30.93 37.66h1.39v1.39h-1.39zM32.28 37.66h1.39v1.39h-1.39zM36.31 37.66h1.39v1.39h-1.39zM37.66 37.66h1.39v1.39h-1.39z" fill="#141414"/></svg>
<div class="t" style="left:1061px;top:558px">¥</div>
<div class="t" style="left:1168px;top:558px"><span style="letter-spacing:0.45px">7.180800</span></div>
<div class="t" style="left:1279px;top:558px">2</div>
<div class="t" style="left:1392px;top:558px;color:#8a8a8e">不需要</div>
<div class="sw" style="left:1526px;top:559px"></div>
<div class="t" style="left:1665px;top:558px">0</div>
<div class="t" style="left:1777px;top:558px;color:#5a6ad6">编辑</div>
<div class="t" style="left:1823px;top:558px;color:#f07a7a">删除</div>
<div class="hl" style="top:753px"></div>
<div class="cb" style="left:251px;top:680px"></div>
<div class="t" style="left:304px;top:678px">通用</div>
<div class="t" style="left:423px;top:678px">手动<span style="letter-spacing:-0.10px">USDT</span></div>
<div class="t" style="left:533px;top:678px"><span style="letter-spacing:0.35px">USDT–TR...</span></div>
<svg class="abs" style="left:645px;top:660px" width="56" height="56" viewBox="0 0 56 56"><circle cx="28.5" cy="28.3" r="22.4" fill="#6f6e70"/><path d="M18 18h21v5h-7.6v20h-5.8V23H18z" fill="#fff"/><ellipse cx="28.5" cy="29.4" rx="13.2" ry="2.7" fill="none" stroke="#fff" stroke-width="1"/><path d="M33 33l9 3.2-6.5 6.8z" fill="none" stroke="#fff" stroke-width="0.9" stroke-linejoin="round"/><path d="M33.5 33.5l3.5 3 -1.5 6M42 36.2l-5 .3" fill="none" stroke="#fff" stroke-width="0.7"/></svg>
<div class="t" style="left:781px;top:630px;line-height:23px;height:23px">地址<span class="c">:</span><span style="letter-spacing:0.17px">TRdtLNisF4G2HguGA6SktrMNU</span></div>
<div class="t" style="left:781px;top:654px;line-height:23px;height:23px"><span style="letter-spacing:0.45px">gMtvLaYqw</span></div>
<div class="t" style="left:781px;top:676px;line-height:23px;height:23px">二维码<span class="c">:</span></div>
<svg class="abs" style="left:792px;top:703px" width="39" height="39" viewBox="0 0 39 39"><path d="M0.00 0.00h1.39v1.39h-1.39zM1.34 0.00h1.39v1.39h-1.39zM2.69 0.00h1.39v1.39h-1.39zM4.03 0.00h1.39v1.39h-1.39zM5.38 0.00h1.39v1.39h-1.39zM6.72 0.00h1.39v1.39h-1.39zM8.07 0.00h1.39v1.39h-1.39zM10.76 0.00h1.39v1.39h-1.39zM14.79 0.00h1.39v1.39h-1.39zM17.48 0.00h1.39v1.39h-1.39zM18.83 0.00h1.39v1.39h-1.39zM21.52 0.00h1.39v1.39h-1.39zM22.86 0.00h1.39v1.39h-1.39zM25.55 0.00h1.39v1.39h-1.39zM26.90 0.00h1.39v1.39h-1.39zM29.59 0.00h1.39v1.39h-1.39zM30.93 0.00h1.39v1.39h-1.39zM32.28 0.00h1.39v1.39h-1.39zM33.62 0.00h1.39v1.39h-1.39zM34.97 0.00h1.39v1.39h-1.39zM36.31 0.00h1.39v1.39h-1.39zM37.66 0.00h1.39v1.39h-1.39zM0.00 1.34h1.39v1.39h-1.39zM8.07 1.34h1.39v1.39h-1.39zM12.10 1.34h1.39v1.39h-1.39zM16.14 1.34h1.39v1.39h-1.39zM18.83 1.34h1.39v1.39h-1.39zM20.17 1.34h1.39v1.39h-1.39zM21.52 1.34h1.39v1.39h-1.39zM22.86 1.34h1.39v1.39h-1.39zM24.21 1.34h1.39v1.39h-1.39zM29.59 1.34h1.39v1.39h-1.39zM37.66 1.34h1.39v1.39h-1.39zM0.00 2.69h1.39v1.39h-1.39zM2.69 2.69h1.39v1.39h-1.39zM4.03 2.69h1.39v1.39h-1.39zM5.38 2.69h1.39v1.39h-1.39zM8.07 2.69h1.39v1.39h-1.39zM14.79 2.69h1.39v1.39h-1.39zM16.14 2.69h1.39v1.39h-1.39zM18.83 2.69h1.39v1.39h-1.39zM22.86 2.69h1.39v1.39h-1.39zM24.21 2.69h1.39v1.39h-1.39zM26.90 2.69h1.39v1.39h-1.39zM29.59 2.69h1.39v1.39h-1.39zM32.28 2.69h1.39v1.39h-1.39zM33.62 2.69h1.39v1.39h-1.39zM34.97 2.69h1.39v1.39h-1.39zM37.66 2.69h1.39v1.39h-1.39zM0.00 4.03h1.39v1.39h-1.39zM2.69 4.03h1.39v1.39h-1.39zM4.03 4.03h1.39v1.39h-1.39zM5.38 4.03h1.39v1.39h-1.39zM8.07 4.03h1.39v1.39h-1.39zM13.45 4.03h1.39v1.39h-1.39zM17.48 4.03h1.39v1.39h-1.39zM18.83 4.03h1.39v1.39h-1.39zM20.17 4.03h1.39v1.39h-1.39zM21.52 4.03h1.39v1.39h-1.39zM22.86 4.03h1.39v1.39h-1.39zM24.21 4.03h1.39v1.39h-1.39zM25.55 4.03h1.39v1.39h-1.39zM29.59 4.03h1.39v1.39h-1.39zM32.28 4.03h1.39v1.39h-1.39zM33.62 4.03h1.39v1.39h-1.39zM34.97 4.03h1.39v1.39h-1.39zM37.66 4.03h1.39v1.39h-1.39zM0.00 5.38h1.39v1.39h-1.39zM2.69 5.38h1.39v1.39h-1.39zM4.03 5.38h1.39v1.39h-1.39zM5.38 5.38h1.39v1.39h-1.39zM8.07 5.38h1.39v1.39h-1.39zM10.76 5.38h1.39v1.39h-1.39zM12.10 5.38h1.39v1.39h-1.39zM13.45 5.38h1.39v1.39h-1.39zM21.52 5.38h1.39v1.39h-1.39zM24.21 5.38h1.39v1.39h-1.39zM25.55 5.38h1.39v1.39h-1.39zM26.90 5.38h1.39v1.39h-1.39zM29.59 5.38h1.39v1.39h-1.39zM32.28 5.38h1.39v1.39h-1.39zM33.62 5.38h1.39v1.39h-1.39zM34.97 5.38h1.39v1.39h-1.39zM37.66 5.38h1.39v1.39h-1.39zM0.00 6.72h1.39v1.39h-1.39zM8.07 6.72h1.39v1.39h-1.39zM10.76 6.72h1.39v1.39h-1.39zM13.45 6.72h1.39v1.39h-1.39zM14.79 6.72h1.39v1.39h-1.39zM16.14 6.72h1.39v1.39h-1.39zM17.48 6.72h1.39v1.39h-1.39zM20.17 6.72h1.39v1.39h-1.39zM22.86 6.72h1.39v1.39h-1.39zM24.21 6.72h1.39v1.39h-1.39zM26.90 6.72h1.39v1.39h-1.39zM29.59 6.72h1.39v1.39h-1.39zM37.66 6.72h1.39v1.39h-1.39zM0.00 8.07h1.39v1.39h-1.39zM1.34 8.07h1.39v1.39h-1.39zM2.69 8.07h1.39v1.39h-1.39zM4.03 8.07h1.39v1.39h-1.39zM5.38 8.07h1.39v1.39h-1.39zM6.72 8.07h1.39v1.39h-1.39zM8.07 8.07h1.39v1.39h-1.39zM12.10 8.07h1.39v1.39h-1.39zM17.48 8.07h1.39v1.39h-1.39zM18.83 8.07h1.39v1.39h-1.39zM21.52 8.07h1.39v1.39h-1.39zM22.86 8.07h1.39v1.39h-1.39zM29.59 8.07h1.39v1.39h-1.39zM30.93 8.07h1.39v1.39h-1.39zM32.28 8.07h1.39v1.39h-1.39zM33.62 8.07h1.39v1.39h-1.39zM34.97 8.07h1.39v1.39h-1.39zM36.31 8.07h1.39v1.39h-1.39zM37.66 8.07h1.39v1.39h-1.39zM12.10 9.41h1.39v1.39h-1.39zM13.45 9.41h1.39v1.39h-1.39zM14.79 9.41h1.39v1.39h-1.39zM17.48 9.41h1.39v1.39h-1.39zM18.83 9.41h1.39v1.39h-1.39zM20.17 9.41h1.39v1.39h-1.39zM21.52 9.41h1.39v1.39h-1.39zM22.86 9.41h1.39v1.39h-1.39zM25.55 9.41h1.39v1.39h-1.39zM26.90 9.41h1.39v1.39h-1.39zM1.34 10.76h1.39v1.39h-1.39zM2.69 10.76h1.39v1.39h-1.39zM4.03 10.76h1.39v1.39h-1.39zM6.72 10.76h1.39v1.39h-1.39zM10.76 10.76h1.39v1.39h-1.39zM12.10 10.76h1.39v1.39h-1.39zM13.45 10.76h1.39v1.39h-1.39zM18.83 10.76h1.39v1.39h-1.39zM21.52 10.76h1.39v1.39h-1.39zM22.86 10.76h1.39v1.39h-1.39zM30.93 10.76h1.39v1.39h-1.39zM34.97 10.76h1.39v1.39h-1.39zM36.31 10.76h1.39v1.39h-1.39zM2.69 12.10h1.39v1.39h-1.39zM4.03 12.10h1.39v1.39h-1.39zM5.38 12.10h1.39v1.39h-1.39zM6.72 12.10h1.39v1.39h-1.39zM9.41 12.10h1.39v1.39h-1.39zM10.76 12.10h1.39v1.39h-1.39zM12.10 12.10h1.39v1.39h-1.39zM13.45 12.10h1.39v1.39h-1.39zM16.14 12.10h1.39v1.39h-1.39zM17.48 12.10h1.39v1.39h-1.39zM18.83 12.10h1.39v1.39h-1.39zM20.17 12.10h1.39v1.39h-1.39zM22.86 12.10h1.39v1.39h-1.39zM25.55 12.10h1.39v1.39h-1.39zM28.24 12.10h1.39v1.39h-1.39zM30.93 12.10h1.39v1.39h-1.39zM32.28 12.10h1.39v1.39h-1.39zM33.62 12.10h1.39v1.39h-1.39zM37.66 12.10h1.39v1.39h-1.39zM0.00 13.45h1.39v1.39h-1.39zM2.69 13.45h1.39v1.39h-1.39zM4.03 13.45h1.39v1.39h-1.39zM6.72 13.45h1.39v1.39h-1.39zM12.10 13.45h1.39v1.39h-1.39zM22.86 13.45h1.39v1.39h-1.39zM32.28 13.45h1.39v1.39h-1.39zM33.62 13.45h1.39v1.39h-1.39zM36.31 13.45h1.39v1.39h-1.39zM0.00 14.79h1.39v1.39h-1.39zM5.38 14.79h1.39v1.39h-1.39zM6.72 14.79h1.39v1.39h-1.39zM8.07 14.79h1.39v1.39h-1.39zM9.41 14.79h1.39v1.39h-1.39zM10.76 14.79h1.39v1.39h-1.39zM13.45 14.79h1.39v1.39h-1.39zM14.79 14.79h1.39v1.39h-1.39zM18.83 14.79h1.39v1.39h-1.39zM20.17 14.79h1.39v1.39h-1.39zM22.86 14.79h1.39v1.39h-1.39zM24.21 14.79h1.39v1.39h-1.39zM26.90 14.79h1.39v1.39h-1.39zM32.28 14.79h1.39v1.39h-1.39zM36.31 14.79h1.39v1.39h-1.39zM1.34 16.14h1.39v1.39h-1.39zM2.69 16.14h1.39v1.39h-1.39zM4.03 16.14h1.39v1.39h-1.39zM8.07 16.14h1.39v1.39h-1.39zM9.41 16.14h1.39v1.39h-1.39zM10.76 16.14h1.39v1.39h-1.39zM12.10 16.14h1.39v1.39h-1.39zM13.45 16.14h1.39v1.39h-1.39zM14.79 16.14h1.39v1.39h-1.39zM16.14 16.14h1.39v1.39h-1.39zM18.83 16.14h1.39v1.39h-1.39zM20.17 16.14h1.39v1.39h-1.39zM21.52 16.14h1.39v1.39h-1.39zM22.86 16.14h1.39v1.39h-1.39zM24.21 16.14h1.39v1.39h-1.39zM25.55 16.14h1.39v1.39h-1.39zM26.90 16.14h1.39v1.39h-1.39zM33.62 16.14h1.39v1.39h-1.39zM34.97 16.14h1.39v1.39h-1.39zM1.34 17.48h1.39v1.39h-1.39zM2.69 17.48h1.39v1.39h-1.39zM6.72 17.48h1.39v1.39h-1.39zM8.07 17.48h1.39v1.39h-1.39zM9.41 17.48h1.39v1.39h-1.39zM14.79 17.48h1.39v1.39h-1.39zM18.83 17.48h1.39v1.39h-1.39zM22.86 17.48h1.39v1.39h-1.39zM24.21 17.48h1.39v1.39h-1.39zM25.55 17.48h1.39v1.39h-1.39zM26.90 17.48h1.39v1.39h-1.39zM28.24 17.48h1.39v1.39h-1.39zM29.59 17.48h1.39v1.39h-1.39zM36.31 17.48h1.39v1.39h-1.39zM0.00 18.83h1.39v1.39h-1.39zM1.34 18.83h1.39v1.39h-1.39zM5.38 18.83h1.39v1.39h-1.39zM6.72 18.83h1.39v1.39h-1.39zM8.07 18.83h1.39v1.39h-1.39zM12.10 18.83h1.39v1.39h-1.39zM13.45 18.83h1.39v1.39h-1.39zM20.17 18.83h1.39v1.39h-1.39zM24.21 18.83h1.39v1.39h-1.39zM25.55 18.83h1.39v1.39h-1.39zM30.93 18.83h1.39v1.39h-1.39zM33.62 18.83h1.39v1.39h-1.39zM34.97 18.83h1.39v1.39h-1.39zM36.31 18.83h1.39v1.39h-1.39zM0.00 20.17h1.39v1.39h-1.39zM4.03 20.17h1.39v1.39h-1.39zM8.07 20.17h1.39v1.39h-1.39zM9.41 20.17h1.39v1.39h-1.39zM14.79 20.17h1.39v1.39h-1.39zM17.48 20.17h1.39v1.39h-1.39zM18.83 20.17h1.39v1.39h-1.39zM21.52 20.17h1.39v1.39h-1.39zM24.21 20.17h1.39v1.39h-1.39zM29.59 20.17h1.39v1.39h-1.39zM30.93 20.17h1.39v1.39h-1.39zM34.97 20.17h1.39v1.39h-1.39zM37.66 20.17h1.39v1.39h-1.39zM0.00 21.52h1.39v1.39h-1.39zM1.34 21.52h1.39v1.39h-1.39zM4.03 21.52h1.39v1.39h-1.39zM5.38 21.52h1.39v1.39h-1.39zM6.72 21.52h1.39v1.39h-1.39zM8.07 21.52h1.39v1.39h-1.39zM12.10 21.52h1.39v1.39h-1.39zM14.79 21.52h1.39v1.39h-1.39zM17.48 21.52h1.39v1.39h-1.39zM18.83 21.52h1.39v1.39h-1.39zM21.52 21.52h1.39v1.39h-1.39zM22.86 21.52h1.39v1.39h-1.39zM24.21 21.52h1.39v1.39h-1.39zM25.55 21.52h1.39v1.39h-1.39zM28.24 21.52h1.39v1.39h-1.39zM29.59 21.52h1.39v1.39h-1.39zM34.97 21.52h1.39v1.39h-1.39zM36.31 21.52h1.39v1.39h-1.39zM37.66 21.52h1.39v1.39h-1.39zM4.03 22.86h1.39v1.39h-1.39zM5.38 22.86h1.39v1.39h-1.39zM8.07 22.86h1.39v1.39h-1.39zM18.83 22.86h1.39v1.39h-1.39zM20.17 22.86h1.39v1.39h-1.39zM21.52 22.86h1.39v1.39h-1.39zM29.59 22.86h1.39v1.39h-1.39zM32.28 22.86h1.39v1.39h-1.39zM33.62 22.86h1.39v1.39h-1.39zM34.97 22.86h1.39v1.39h-1.39zM1.34 24.21h1.39v1.39h-1.39zM2.69 24.21h1.39v1.39h-1.39zM4.03 24.21h1.39v1.39h-1.39zM5.38 24.21h1.39v1.39h-1.39zM6.72 24.21h1.39v1.39h-1.39zM10.76 24.21h1.39v1.39h-1.39zM12.10 24.21h1.39v1.39h-1.39zM14.79 24.21h1.39v1.39h-1.39zM16.14 24.21h1.39v1.39h-1.39zM18.83 24.21h1.39v1.39h-1.39zM21.52 24.21h1.39v1.39h-1.39zM25.55 24.21h1.39v1.39h-1.39zM26.90 24.21h1.39v1.39h-1.39zM30.93 24.21h1.39v1.39h-1.39zM32.28 24.21h1.39v1.39h-1.39zM33.62 24.21h1.39v1.39h-1.39zM36.31 24.21h1.39v1.39h-1.39zM37.66 24.21h1.39v1.39h-1.39zM1.34 25.55h1.39v1.39h-1.39zM2.69 25.55h1.39v1.39h-1.39zM12.10 25.55h1.39v1.39h-1.39zM13.45 25.55h1.39v1.39h-1.39zM14.79 25.55h1.39v1.39h-1.39zM17.48 25.55h1.39v1.39h-1.39zM20.17 25.55h1.39v1.39h-1.39zM22.86 25.55h1.39v1.39h-1.39zM29.59 25.55h1.39v1.39h-1.39zM30.93 25.55h1.39v1.39h-1.39zM33.62 25.55h1.39v1.39h-1.39zM36.31 25.55h1.39v1.39h-1.39zM0.00 26.90h1.39v1.39h-1.39zM4.03 26.90h1.39v1.39h-1.39zM6.72 26.90h1.39v1.39h-1.39zM8.07 26.90h1.39v1.39h-1.39zM10.76 26.90h1.39v1.39h-1.39zM12.10 26.90h1.39v1.39h-1.39zM14.79 26.90h1.39v1.39h-1.39zM20.17 26.90h1.39v1.39h-1.39zM24.21 26.90h1.39v1.39h-1.39zM25.55 26.90h1.39v1.39h-1.39zM26.90 26.90h1.39v1.39h-1.39zM28.24 26.90h1.39v1.39h-1.39zM32.28 26.90h1.39v1.39h-1.39zM33.62 26.90h1.39v1.39h-1.39zM34.97 26.90h1.39v1.39h-1.39zM12.10 28.24h1.39v1.39h-1.39zM16.14 28.24h1.39v1.39h-1.39zM17.48 28.24h1.39v1.39h-1.39zM21.52 28.24h1.39v1.39h-1.39zM22.86 28.24h1.39v1.39h-1.39zM24.21 28.24h1.39v1.39h-1.39zM25.55 28.24h1.39v1.39h-1.39zM30.93 28.24h1.39v1.39h-1.39zM0.00 29.59h1.39v1.39h-1.39zM1.34 29.59h1.39v1.39h-1.39zM2.69 29.59h1.39v1.39h-1.39zM4.03 29.59h1.39v1.39h-1.39zM5.38 29.59h1.39v1.39h-1.39zM6.72 29.59h1.39v1.39h-1.39zM8.07 29.59h1.39v1.39h-1.39zM12.10 29.59h1.39v1.39h-1.39zM13.45 29.59h1.39v1.39h-1.39zM14.79 29.59h1.39v1.39h-1.39zM16.14 29.59h1.39v1.39h-1.39zM17.48 29.59h1.39v1.39h-1.39zM20.17 29.59h1.39v1.39h-1.39zM21.52 29.59h1.39v1.39h-1.39zM22.86 29.59h1.39v1.39h-1.39zM26.90 29.59h1.39v1.39h-1.39zM28.24 29.59h1.39v1.39h-1.39zM29.59 29.59h1.39v1.39h-1.39zM30.93 29.59h1.39v1.39h-1.39zM33.62 29.59h1.39v1.39h-1.39zM34.97 29.59h1.39v1.39h-1.39zM0.00 30.93h1.39v1.39h-1.39zM8.07 30.93h1.39v1.39h-1.39zM12.10 30.93h1.39v1.39h-1.39zM14.79 30.93h1.39v1.39h-1.39zM20.17 30.93h1.39v1.39h-1.39zM22.86 30.93h1.39v1.39h-1.39zM28.24 30.93h1.39v1.39h-1.39zM29.59 30.93h1.39v1.39h-1.39zM30.93 30.93h1.39v1.39h-1.39zM32.28 30.93h1.39v1.39h-1.39zM33.62 30.93h1.39v1.39h-1.39zM37.66 30.93h1.39v1.39h-1.39zM0.00 32.28h1.39v1.39h-1.39zM2.69 32.28h1.39v1.39h-1.39zM4.03 32.28h1.39v1.39h-1.39zM5.38 32.28h1.39v1.39h-1.39zM8.07 32.28h1.39v1.39h-1.39zM10.76 32.28h1.39v1.39h-1.39zM13.45 32.28h1.39v1.39h-1.39zM14.79 32.28h1.39v1.39h-1.39zM16.14 32.28h1.39v1.39h-1.39zM17.48 32.28h1.39v1.39h-1.39zM18.83 32.28h1.39v1.39h-1.39zM20.17 32.28h1.39v1.39h-1.39zM21.52 32.28h1.39v1.39h-1.39zM26.90 32.28h1.39v1.39h-1.39zM28.24 32.28h1.39v1.39h-1.39zM32.28 32.28h1.39v1.39h-1.39zM34.97 32.28h1.39v1.39h-1.39zM36.31 32.28h1.39v1.39h-1.39zM0.00 33.62h1.39v1.39h-1.39zM2.69 33.62h1.39v1.39h-1.39zM4.03 33.62h1.39v1.39h-1.39zM5.38 33.62h1.39v1.39h-1.39zM8.07 33.62h1.39v1.39h-1.39zM13.45 33.62h1.39v1.39h-1.39zM16.14 33.62h1.39v1.39h-1.39zM21.52 33.62h1.39v1.39h-1.39zM26.90 33.62h1.39v1.39h-1.39zM36.31 33.62h1.39v1.39h-1.39zM37.66 33.62h1.39v1.39h-1.39zM0.00 34.97h1.39v1.39h-1.39zM2.69 34.97h1.39v1.39h-1.39zM4.03 34.97h1.39v1.39h-1.39zM5.38 34.97h1.39v1.39h-1.39zM8.07 34.97h1.39v1.39h-1.39zM10.76 34.97h1.39v1.39h-1.39zM13.45 34.97h1.39v1.39h-1.39zM18.83 34.97h1.39v1.39h-1.39zM20.17 34.97h1.39v1.39h-1.39zM21.52 34.97h1.39v1.39h-1.39zM22.86 34.97h1.39v1.39h-1.39zM24.21 34.97h1.39v1.39h-1.39zM25.55 34.97h1.39v1.39h-1.39zM26.90 34.97h1.39v1.39h-1.39zM28.24 34.97h1.39v1.39h-1.39zM33.62 34.97h1.39v1.39h-1.39zM37.66 34.97h1.39v1.39h-1.39zM0.00 36.31h1.39v1.39h-1.39zM8.07 36.31h1.39v1.39h-1.39zM14.79 36.31h1.39v1.39h-1.39zM16.14 36.31h1.39v1.39h-1.39zM18.83 36.31h1.39v1.39h-1.39zM25.55 36.31h1.39v1.39h-1.39zM26.90 36.31h1.39v1.39h-1.39zM28.24 36.31h1.39v1.39h-1.39zM34.97 36.31h1.39v1.39h-1.39zM36.31 36.31h1.39v1.39h-1.39zM37.66 36.31h1.39v1.39h-1.39zM0.00 37.66h1.39v1.39h-1.39zM1.34 37.66h1.39v1.39h-1.39zM2.69 37.66h1.39v1.39h-1.39zM4.03 37.66h1.39v1.39h-1.39zM5.38 37.66h1.39v1.39h-1.39zM6.72 37.66h1.39v1.39h-1.39zM8.07 37.66h1.39v1.39h-1.39zM12.10 37.66h1.39v1.39h-1.39zM16.14 37.66h1.39v1.39h-1.39zM20.17 37.66h1.39v1.39h-1.39zM25.55 37.66h1.39v1.39h-1.39zM29.59 37.66h1.39v1.39h-1.39zM32.28 37.66h1.39v1.39h-1.39zM34.97 37.66h1.39v1.39h-1.39z" fill="#141414"/></svg>
<div class="t" style="left:1058px;top:678px"><span style="letter-spacing:-0.20px">USDT</span></div>
<div class="t" style="left:1168px;top:678px"><span style="letter-spacing:0.45px">1.000000</span></div>
<div class="t" style="left:1279px;top:678px">2</div>
<div class="t" style="left:1392px;top:678px;color:#8a8a8e">不需要</div>
<div class="sw" style="left:1526px;top:678px"></div>
<div class="t" style="left:1665px;top:678px">0</div>
<div class="t" style="left:1777px;top:678px;color:#5a6ad6">编辑</div>
<div class="t" style="left:1823px;top:678px;color:#f07a7a">删除</div>
<div class="hl" style="top:861px"></div>
<div class="cb" style="left:251px;top:799px"></div>
<div class="t" style="left:304px;top:797px">通用</div>
<div class="t" style="left:423px;top:797px">扫码</div>
<div class="t" style="left:533px;top:797px">微信扫码</div>
<svg class="abs" style="left:645px;top:779px" width="56" height="56" viewBox="0 0 56 56"><circle cx="28.4" cy="28.3" r="22.2" fill="#2cc13e"/><ellipse cx="24.3" cy="25.6" rx="10.1" ry="8.6" fill="#fff"/><path d="M16.5 31.5l-.8 3.3 4.2-2z" fill="#fff"/><ellipse cx="34" cy="31.8" rx="9.6" ry="8.4" fill="#2cc13e"/><ellipse cx="34" cy="31.8" rx="8.8" ry="7.6" fill="#fff"/><path d="M37.5 37.5l2.2 2.5-.2-3.6z" fill="#fff"/><circle cx="20.6" cy="22.2" r="1.3" fill="#2cc13e"/><circle cx="27.9" cy="22.2" r="1.3" fill="#2cc13e"/><circle cx="31.6" cy="29.5" r="1" fill="#2cc13e"/><circle cx="37" cy="29.5" r="1" fill="#2cc13e"/></svg>
<div class="t" style="left:781px;top:762px;line-height:23px;height:23px">账号<span class="c">:</span><span style="letter-spacing:0.60px">123456789</span></div>
<div class="t" style="left:781px;top:784px;line-height:23px;height:23px">二维码<span class="c">:</span></div>
<svg class="abs" style="left:792px;top:811px" width="39" height="39" viewBox="0 0 39 39"><path d="M0.00 0.00h1.39v1.39h-1.39zM1.34 0.00h1.39v1.39h-1.39zM2.69 0.00h1.39v1.39h-1.39zM4.03 0.00h1.39v1.39h-1.39zM5.38 0.00h1.39v1.39h-1.39zM6.72 0.00h1.39v1.39h-1.39zM8.07 0.00h1.39v1.39h-1.39zM10.76 0.00h1.39v1.39h-1.39zM12.10 0.00h1.39v1.39h-1.39zM13.45 0.00h1.39v1.39h-1.39zM16.14 0.00h1.39v1.39h-1.39zM20.17 0.00h1.39v1.39h-1.39zM24.21 0.00h1.39v1.39h-1.39zM26.90 0.00h1.39v1.39h-1.39zM29.59 0.00h1.39v1.39h-1.39zM30.93 0.00h1.39v1.39h-1.39zM32.28 0.00h1.39v1.39h-1.39zM33.62 0.00h1.39v1.39h-1.39zM34.97 0.00h1.39v1.39h-1.39zM36.31 0.00h1.39v1.39h-1.39zM37.66 0.00h1.39v1.39h-1.39zM0.00 1.34h1.39v1.39h-1.39zM8.07 1.34h1.39v1.39h-1.39zM10.76 1.34h1.39v1.39h-1.39zM12.10 1.34h1.39v1.39h-1.39zM13.45 1.34h1.39v1.39h-1.39zM16.14 1.34h1.39v1.39h-1.39zM17.48 1.34h1.39v1.39h-1.39zM18.83 1.34h1.39v1.39h-1.39zM21.52 1.34h1.39v1.39h-1.39zM24.21 1.34h1.39v1.39h-1.39zM26.90 1.34h1.39v1.39h-1.39zM29.59 1.34h1.39v1.39h-1.39zM37.66 1.34h1.39v1.39h-1.39zM0.00 2.69h1.39v1.39h-1.39zM2.69 2.69h1.39v1.39h-1.39zM4.03 2.69h1.39v1.39h-1.39zM5.38 2.69h1.39v1.39h-1.39zM8.07 2.69h1.39v1.39h-1.39zM14.79 2.69h1.39v1.39h-1.39zM16.14 2.69h1.39v1.39h-1.39zM17.48 2.69h1.39v1.39h-1.39zM22.86 2.69h1.39v1.39h-1.39zM24.21 2.69h1.39v1.39h-1.39zM29.59 2.69h1.39v1.39h-1.39zM32.28 2.69h1.39v1.39h-1.39zM33.62 2.69h1.39v1.39h-1.39zM34.97 2.69h1.39v1.39h-1.39zM37.66 2.69h1.39v1.39h-1.39zM0.00 4.03h1.39v1.39h-1.39zM2.69 4.03h1.39v1.39h-1.39zM4.03 4.03h1.39v1.39h-1.39zM5.38 4.03h1.39v1.39h-1.39zM8.07 4.03h1.39v1.39h-1.39zM10.76 4.03h1.39v1.39h-1.39zM14.79 4.03h1.39v1.39h-1.39zM16.14 4.03h1.39v1.39h-1.39zM18.83 4.03h1.39v1.39h-1.39zM20.17 4.03h1.39v1.39h-1.39zM21.52 4.03h1.39v1.39h-1.39zM25.55 4.03h1.39v1.39h-1.39zM26.90 4.03h1.39v1.39h-1.39zM29.59 4.03h1.39v1.39h-1.39zM32.28 4.03h1.39v1.39h-1.39zM33.62 4.03h1.39v1.39h-1.39zM34.97 4.03h1.39v1.39h-1.39zM37.66 4.03h1.39v1.39h-1.39zM0.00 5.38h1.39v1.39h-1.39zM2.69 5.38h1.39v1.39h-1.39zM4.03 5.38h1.39v1.39h-1.39zM5.38 5.38h1.39v1.39h-1.39zM8.07 5.38h1.39v1.39h-1.39zM10.76 5.38h1.39v1.39h-1.39zM12.10 5.38h1.39v1.39h-1.39zM17.48 5.38h1.39v1.39h-1.39zM21.52 5.38h1.39v1.39h-1.39zM24.21 5.38h1.39v1.39h-1.39zM25.55 5.38h1.39v1.39h-1.39zM26.90 5.38h1.39v1.39h-1.39zM29.59 5.38h1.39v1.39h-1.39zM32.28 5.38h1.39v1.39h-1.39zM33.62 5.38h1.39v1.39h-1.39zM34.97 5.38h1.39v1.39h-1.39zM37.66 5.38h1.39v1.39h-1.39zM0.00 6.72h1.39v1.39h-1.39zM8.07 6.72h1.39v1.39h-1.39zM10.76 6.72h1.39v1.39h-1.39zM12.10 6.72h1.39v1.39h-1.39zM13.45 6.72h1.39v1.39h-1.39zM14.79 6.72h1.39v1.39h-1.39zM16.14 6.72h1.39v1.39h-1.39zM17.48 6.72h1.39v1.39h-1.39zM24.21 6.72h1.39v1.39h-1.39zM25.55 6.72h1.39v1.39h-1.39zM26.90 6.72h1.39v1.39h-1.39zM29.59 6.72h1.39v1.39h-1.39zM37.66 6.72h1.39v1.39h-1.39zM0.00 8.07h1.39v1.39h-1.39zM1.34 8.07h1.39v1.39h-1.39zM2.69 8.07h1.39v1.39h-1.39zM4.03 8.07h1.39v1.39h-1.39zM5.38 8.07h1.39v1.39h-1.39zM6.72 8.07h1.39v1.39h-1.39zM8.07 8.07h1.39v1.39h-1.39zM10.76 8.07h1.39v1.39h-1.39zM12.10 8.07h1.39v1.39h-1.39zM13.45 8.07h1.39v1.39h-1.39zM17.48 8.07h1.39v1.39h-1.39zM18.83 8.07h1.39v1.39h-1.39zM20.17 8.07h1.39v1.39h-1.39zM21.52 8.07h1.39v1.39h-1.39zM24.21 8.07h1.39v1.39h-1.39zM29.59 8.07h1.39v1.39h-1.39zM30.93 8.07h1.39v1.39h-1.39zM32.28 8.07h1.39v1.39h-1.39zM33.62 8.07h1.39v1.39h-1.39zM34.97 8.07h1.39v1.39h-1.39zM36.31 8.07h1.39v1.39h-1.39zM37.66 8.07h1.39v1.39h-1.39zM13.45 9.41h1.39v1.39h-1.39zM17.48 9.41h1.39v1.39h-1.39zM20.17 9.41h1.39v1.39h-1.39zM21.52 9.41h1.39v1.39h-1.39zM22.86 9.41h1.39v1.39h-1.39zM24.21 9.41h1.39v1.39h-1.39zM25.55 9.41h1.39v1.39h-1.39zM26.90 9.41h1.39v1.39h-1.39zM1.34 10.76h1.39v1.39h-1.39zM4.03 10.76h1.39v1.39h-1.39zM6.72 10.76h1.39v1.39h-1.39zM8.07 10.76h1.39v1.39h-1.39zM9.41 10.76h1.39v1.39h-1.39zM13.45 10.76h1.39v1.39h-1.39zM18.83 10.76h1.39v1.39h-1.39zM21.52 10.76h1.39v1.39h-1.39zM22.86 10.76h1.39v1.39h-1.39zM24.21 10.76h1.39v1.39h-1.39zM26.90 10.76h1.39v1.39h-1.39zM28.24 10.76h1.39v1.39h-1.39zM30.93 10.76h1.39v1.39h-1.39zM32.28 10.76h1.39v1.39h-1.39zM34.97 10.76h1.39v1.39h-1.39zM37.66 10.76h1.39v1.39h-1.39zM0.00 12.10h1.39v1.39h-1.39zM1.34 12.10h1.39v1.39h-1.39zM5.38 12.10h1.39v1.39h-1.39zM10.76 12.10h1.39v1.39h-1.39zM13.45 12.10h1.39v1.39h-1.39zM16.14 12.10h1.39v1.39h-1.39zM18.83 12.10h1.39v1.39h-1.39zM22.86 12.10h1.39v1.39h-1.39zM25.55 12.10h1.39v1.39h-1.39zM26.90 12.10h1.39v1.39h-1.39zM30.93 12.10h1.39v1.39h-1.39zM33.62 12.10h1.39v1.39h-1.39zM0.00 13.45h1.39v1.39h-1.39zM2.69 13.45h1.39v1.39h-1.39zM6.72 13.45h1.39v1.39h-1.39zM9.41 13.45h1.39v1.39h-1.39zM10.76 13.45h1.39v1.39h-1.39zM16.14 13.45h1.39v1.39h-1.39zM17.48 13.45h1.39v1.39h-1.39zM21.52 13.45h1.39v1.39h-1.39zM24.21 13.45h1.39v1.39h-1.39zM25.55 13.45h1.39v1.39h-1.39zM28.24 13.45h1.39v1.39h-1.39zM29.59 13.45h1.39v1.39h-1.39zM32.28 13.45h1.39v1.39h-1.39zM33.62 13.45h1.39v1.39h-1.39zM37.66 13.45h1.39v1.39h-1.39zM0.00 14.79h1.39v1.39h-1.39zM1.34 14.79h1.39v1.39h-1.39zM2.69 14.79h1.39v1.39h-1.39zM4.03 14.79h1.39v1.39h-1.39zM8.07 14.79h1.39v1.39h-1.39zM9.41 14.79h1.39v1.39h-1.39zM14.79 14.79h1.39v1.39h-1.39zM17.48 14.79h1.39v1.39h-1.39zM18.83 14.79h1.39v1.39h-1.39zM20.17 14.79h1.39v1.39h-1.39zM21.52 14.79h1.39v1.39h-1.39zM22.86 14.79h1.39v1.39h-1.39zM24.21 14.79h1.39v1.39h-1.39zM30.93 14.79h1.39v1.39h-1.39zM37.66 14.79h1.39v1.39h-1.39zM0.00 16.14h1.39v1.39h-1.39zM1.34 16.14h1.39v1.39h-1.39zM4.03 16.14h1.39v1.39h-1.39zM5.38 16.14h1.39v1.39h-1.39zM6.72 16.14h1.39v1.39h-1.39zM9.41 16.14h1.39v1.39h-1.39zM10.76 16.14h1.39v1.39h-1.39zM12.10 16.14h1.39v1.39h-1.39zM20.17 16.14h1.39v1.39h-1.39zM22.86 16.14h1.39v1.39h-1.39zM24.21 16.14h1.39v1.39h-1.39zM28.24 16.14h1.39v1.39h-1.39zM30.93 16.14h1.39v1.39h-1.39zM32.28 16.14h1.39v1.39h-1.39zM33.62 16.14h1.39v1.39h-1.39zM36.31 16.14h1.39v1.39h-1.39zM0.00 17.48h1.39v1.39h-1.39zM4.03 17.48h1.39v1.39h-1.39zM10.76 17.48h1.39v1.39h-1.39zM12.10 17.48h1.39v1.39h-1.39zM13.45 17.48h1.39v1.39h-1.39zM16.14 17.48h1.39v1.39h-1.39zM20.17 17.48h1.39v1.39h-1.39zM21.52 17.48h1.39v1.39h-1.39zM22.86 17.48h1.39v1.39h-1.39zM25.55 17.48h1.39v1.39h-1.39zM28.24 17.48h1.39v1.39h-1.39zM29.59 17.48h1.39v1.39h-1.39zM30.93 17.48h1.39v1.39h-1.39zM32.28 17.48h1.39v1.39h-1.39zM34.97 17.48h1.39v1.39h-1.39zM37.66 17.48h1.39v1.39h-1.39zM5.38 18.83h1.39v1.39h-1.39zM6.72 18.83h1.39v1.39h-1.39zM13.45 18.83h1.39v1.39h-1.39zM14.79 18.83h1.39v1.39h-1.39zM17.48 18.83h1.39v1.39h-1.39zM20.17 18.83h1.39v1.39h-1.39zM21.52 18.83h1.39v1.39h-1.39zM24.21 18.83h1.39v1.39h-1.39zM25.55 18.83h1.39v1.39h-1.39zM26.90 18.83h1.39v1.39h-1.39zM32.28 18.83h1.39v1.39h-1.39zM33.62 18.83h1.39v1.39h-1.39zM34.97 18.83h1.39v1.39h-1.39zM37.66 18.83h1.39v1.39h-1.39zM1.34 20.17h1.39v1.39h-1.39zM2.69 20.17h1.39v1.39h-1.39zM5.38 20.17h1.39v1.39h-1.39zM6.72 20.17h1.39v1.39h-1.39zM12.10 20.17h1.39v1.39h-1.39zM16.14 20.17h1.39v1.39h-1.39zM17.48 20.17h1.39v1.39h-1.39zM20.17 20.17h1.39v1.39h-1.39zM22.86 20.17h1.39v1.39h-1.39zM24.21 20.17h1.39v1.39h-1.39zM32.28 20.17h1.39v1.39h-1.39zM0.00 21.52h1.39v1.39h-1.39zM1.34 21.52h1.39v1.39h-1.39zM2.69 21.52h1.39v1.39h-1.39zM4.03 21.52h1.39v1.39h-1.39zM8.07 21.52h1.39v1.39h-1.39zM10.76 21.52h1.39v1.39h-1.39zM12.10 21.52h1.39v1.39h-1.39zM13.45 21.52h1.39v1.39h-1.39zM21.52 21.52h1.39v1.39h-1.39zM24.21 21.52h1.39v1.39h-1.39zM25.55 21.52h1.39v1.39h-1.39zM26.90 21.52h1.39v1.39h-1.39zM29.59 21.52h1.39v1.39h-1.39zM30.93 21.52h1.39v1.39h-1.39zM32.28 21.52h1.39v1.39h-1.39zM33.62 21.52h1.39v1.39h-1.39zM34.97 21.52h1.39v1.39h-1.39zM36.31 21.52h1.39v1.39h-1.39zM37.66 21.52h1.39v1.39h-1.39zM0.00 22.86h1.39v1.39h-1.39zM1.34 22.86h1.39v1.39h-1.39zM2.69 22.86h1.39v1.39h-1.39zM4.03 22.86h1.39v1.39h-1.39zM6.72 22.86h1.39v1.39h-1.39zM9.41 22.86h1.39v1.39h-1.39zM12.10 22.86h1.39v1.39h-1.39zM13.45 22.86h1.39v1.39h-1.39zM14.79 22.86h1.39v1.39h-1.39zM18.83 22.86h1.39v1.39h-1.39zM21.52 22.86h1.39v1.39h-1.39zM24.21 22.86h1.39v1.39h-1.39zM26.90 22.86h1.39v1.39h-1.39zM29.59 22.86h1.39v1.39h-1.39zM33.62 22.86h1.39v1.39h-1.39zM34.97 22.86h1.39v1.39h-1.39zM2.69 24.21h1.39v1.39h-1.39zM9.41 24.21h1.39v1.39h-1.39zM10.76 24.21h1.39v1.39h-1.39zM12.10 24.21h1.39v1.39h-1.39zM16.14 24.21h1.39v1.39h-1.39zM17.48 24.21h1.39v1.39h-1.39zM18.83 24.21h1.39v1.39h-1.39zM20.17 24.21h1.39v1.39h-1.39zM22.86 24.21h1.39v1.39h-1.39zM25.55 24.21h1.39v1.39h-1.39zM26.90 24.21h1.39v1.39h-1.39zM28.24 24.21h1.39v1.39h-1.39zM30.93 24.21h1.39v1.39h-1.39zM32.28 24.21h1.39v1.39h-1.39zM34.97 24.21h1.39v1.39h-1.39zM36.31 24.21h1.39v1.39h-1.39zM37.66 24.21h1.39v1.39h-1.39zM2.69 25.55h1.39v1.39h-1.39zM4.03 25.55h1.39v1.39h-1.39zM5.38 25.55h1.39v1.39h-1.39zM8.07 25.55h1.39v1.39h-1.39zM16.14 25.55h1.39v1.39h-1.39zM18.83 25.55h1.39v1.39h-1.39zM20.17 25.55h1.39v1.39h-1.39zM21.52 25.55h1.39v1.39h-1.39zM22.86 25.55h1.39v1.39h-1.39zM28.24 25.55h1.39v1.39h-1.39zM33.62 25.55h1.39v1.39h-1.39zM37.66 25.55h1.39v1.39h-1.39zM0.00 26.90h1.39v1.39h-1.39zM1.34 26.90h1.39v1.39h-1.39zM6.72 26.90h1.39v1.39h-1.39zM17.48 26.90h1.39v1.39h-1.39zM18.83 26.90h1.39v1.39h-1.39zM20.17 26.90h1.39v1.39h-1.39zM26.90 26.90h1.39v1.39h-1.39zM28.24 26.90h1.39v1.39h-1.39zM32.28 26.90h1.39v1.39h-1.39zM36.31 26.90h1.39v1.39h-1.39zM10.76 28.24h1.39v1.39h-1.39zM12.10 28.24h1.39v1.39h-1.39zM21.52 28.24h1.39v1.39h-1.39zM24.21 28.24h1.39v1.39h-1.39zM26.90 28.24h1.39v1.39h-1.39zM28.24 28.24h1.39v1.39h-1.39zM30.93 28.24h1.39v1.39h-1.39zM36.31 28.24h1.39v1.39h-1.39zM0.00 29.59h1.39v1.39h-1.39zM1.34 29.59h1.39v1.39h-1.39zM2.69 29.59h1.39v1.39h-1.39zM4.03 29.59h1.39v1.39h-1.39zM5.38 29.59h1.39v1.39h-1.39zM6.72 29.59h1.39v1.39h-1.39zM8.07 29.59h1.39v1.39h-1.39zM10.76 29.59h1.39v1.39h-1.39zM12.10 29.59h1.39v1.39h-1.39zM13.45 29.59h1.39v1.39h-1.39zM17.48 29.59h1.39v1.39h-1.39zM18.83 29.59h1.39v1.39h-1.39zM24.21 29.59h1.39v1.39h-1.39zM25.55 29.59h1.39v1.39h-1.39zM34.97 29.59h1.39v1.39h-1.39zM37.66 29.59h1.39v1.39h-1.39zM0.00 30.93h1.39v1.39h-1.39zM8.07 30.93h1.39v1.39h-1.39zM10.76 30.93h1.39v1.39h-1.39zM17.48 30.93h1.39v1.39h-1.39zM18.83 30.93h1.39v1.39h-1.39zM20.17 30.93h1.39v1.39h-1.39zM21.52 30.93h1.39v1.39h-1.39zM28.24 30.93h1.39v1.39h-1.39zM30.93 30.93h1.39v1.39h-1.39zM32.28 30.93h1.39v1.39h-1.39zM0.00 32.28h1.39v1.39h-1.39zM2.69 32.28h1.39v1.39h-1.39zM4.03 32.28h1.39v1.39h-1.39zM5.38 32.28h1.39v1.39h-1.39zM8.07 32.28h1.39v1.39h-1.39zM10.76 32.28h1.39v1.39h-1.39zM12.10 32.28h1.39v1.39h-1.39zM13.45 32.28h1.39v1.39h-1.39zM14.79 32.28h1.39v1.39h-1.39zM17.48 32.28h1.39v1.39h-1.39zM18.83 32.28h1.39v1.39h-1.39zM20.17 32.28h1.39v1.39h-1.39zM24.21 32.28h1.39v1.39h-1.39zM26.90 32.28h1.39v1.39h-1.39zM28.24 32.28h1.39v1.39h-1.39zM29.59 32.28h1.39v1.39h-1.39zM30.93 32.28h1.39v1.39h-1.39zM33.62 32.28h1.39v1.39h-1.39zM34.97 32.28h1.39v1.39h-1.39zM0.00 33.62h1.39v1.39h-1.39zM2.69 33.62h1.39v1.39h-1.39zM4.03 33.62h1.39v1.39h-1.39zM5.38 33.62h1.39v1.39h-1.39zM8.07 33.62h1.39v1.39h-1.39zM10.76 33.62h1.39v1.39h-1.39zM17.48 33.62h1.39v1.39h-1.39zM18.83 33.62h1.39v1.39h-1.39zM20.17 33.62h1.39v1.39h-1.39zM30.93 33.62h1.39v1.39h-1.39zM32.28 33.62h1.39v1.39h-1.39zM33.62 33.62h1.39v1.39h-1.39zM34.97 33.62h1.39v1.39h-1.39zM36.31 33.62h1.39v1.39h-1.39zM37.66 33.62h1.39v1.39h-1.39zM0.00 34.97h1.39v1.39h-1.39zM2.69 34.97h1.39v1.39h-1.39zM4.03 34.97h1.39v1.39h-1.39zM5.38 34.97h1.39v1.39h-1.39zM8.07 34.97h1.39v1.39h-1.39zM10.76 34.97h1.39v1.39h-1.39zM14.79 34.97h1.39v1.39h-1.39zM16.14 34.97h1.39v1.39h-1.39zM21.52 34.97h1.39v1.39h-1.39zM22.86 34.97h1.39v1.39h-1.39zM24.21 34.97h1.39v1.39h-1.39zM26.90 34.97h1.39v1.39h-1.39zM28.24 34.97h1.39v1.39h-1.39zM30.93 34.97h1.39v1.39h-1.39zM32.28 34.97h1.39v1.39h-1.39zM33.62 34.97h1.39v1.39h-1.39zM34.97 34.97h1.39v1.39h-1.39zM0.00 36.31h1.39v1.39h-1.39zM8.07 36.31h1.39v1.39h-1.39zM10.76 36.31h1.39v1.39h-1.39zM16.14 36.31h1.39v1.39h-1.39zM17.48 36.31h1.39v1.39h-1.39zM18.83 36.31h1.39v1.39h-1.39zM22.86 36.31h1.39v1.39h-1.39zM24.21 36.31h1.39v1.39h-1.39zM26.90 36.31h1.39v1.39h-1.39zM29.59 36.31h1.39v1.39h-1.39zM32.28 36.31h1.39v1.39h-1.39zM33.62 36.31h1.39v1.39h-1.39zM0.00 37.66h1.39v1.39h-1.39zM1.34 37.66h1.39v1.39h-1.39zM2.69 37.66h1.39v1.39h-1.39zM4.03 37.66h1.39v1.39h-1.39zM5.38 37.66h1.39v1.39h-1.39zM6.72 37.66h1.39v1.39h-1.39zM8.07 37.66h1.39v1.39h-1.39zM10.76 37.66h1.39v1.39h-1.39zM16.14 37.66h1.39v1.39h-1.39zM18.83 37.66h1.39v1.39h-1.39zM21.52 37.66h1.39v1.39h-1.39zM22.86 37.66h1.39v1.39h-1.39zM24.21 37.66h1.39v1.39h-1.39zM26.90 37.66h1.39v1.39h-1.39zM37.66 37.66h1.39v1.39h-1.39z" fill="#141414"/></svg>
<div class="t" style="left:1061px;top:797px">¥</div>
<div class="t" style="left:1168px;top:797px"><span style="letter-spacing:0.45px">7.180800</span></div>
<div class="t" style="left:1279px;top:797px">2</div>
<div class="t" style="left:1392px;top:797px;color:#67c23a">需要</div>
<div class="sw" style="left:1526px;top:798px"></div>
<div class="t" style="left:1665px;top:797px">0</div>
<div class="t" style="left:1777px;top:797px;color:#5a6ad6">编辑</div>
<div class="t" style="left:1823px;top:797px;color:#f07a7a">删除</div>
<div class="t" style="left:1443px;top:886px;color:#555;letter-spacing:0.6px">共 6 条</div>
<div class="inp" style="left:1505px;top:880px;width:128px"></div>
<div class="t" style="left:1532px;top:886px;color:#555;letter-spacing:0.5px">20条/页</div>
<svg class="abs" style="left:1609px;top:892px" width="12" height="8" viewBox="0 0 12 8" fill="none" stroke="#999" stroke-width="1.1"><path d="M1 1.5l5 5 5-5"/></svg>
<svg class="abs" style="left:1660px;top:891px" width="8" height="10" viewBox="0 0 8 10" fill="none" stroke="#c0c4cc" stroke-width="1.1"><path d="M6 1L2 5l4 4"/></svg>
<div class="t" style="left:1695px;top:886px;color:#5b68c0">1</div>
<svg class="abs" style="left:1727px;top:891px" width="8" height="10" viewBox="0 0 8 10" fill="none" stroke="#999" stroke-width="1.1"><path d="M2 1l4 4-4 4"/></svg>
<div class="t" style="left:1763px;top:886px;color:#555">前往</div>
<div class="inp" style="left:1799px;top:880px;width:55px"></div>
<div class="t" style="left:1824px;top:887px;color:#555;font-size:12px">1</div>
<div class="t" style="left:1864px;top:886px;color:#555">页</div>
</body></html>
